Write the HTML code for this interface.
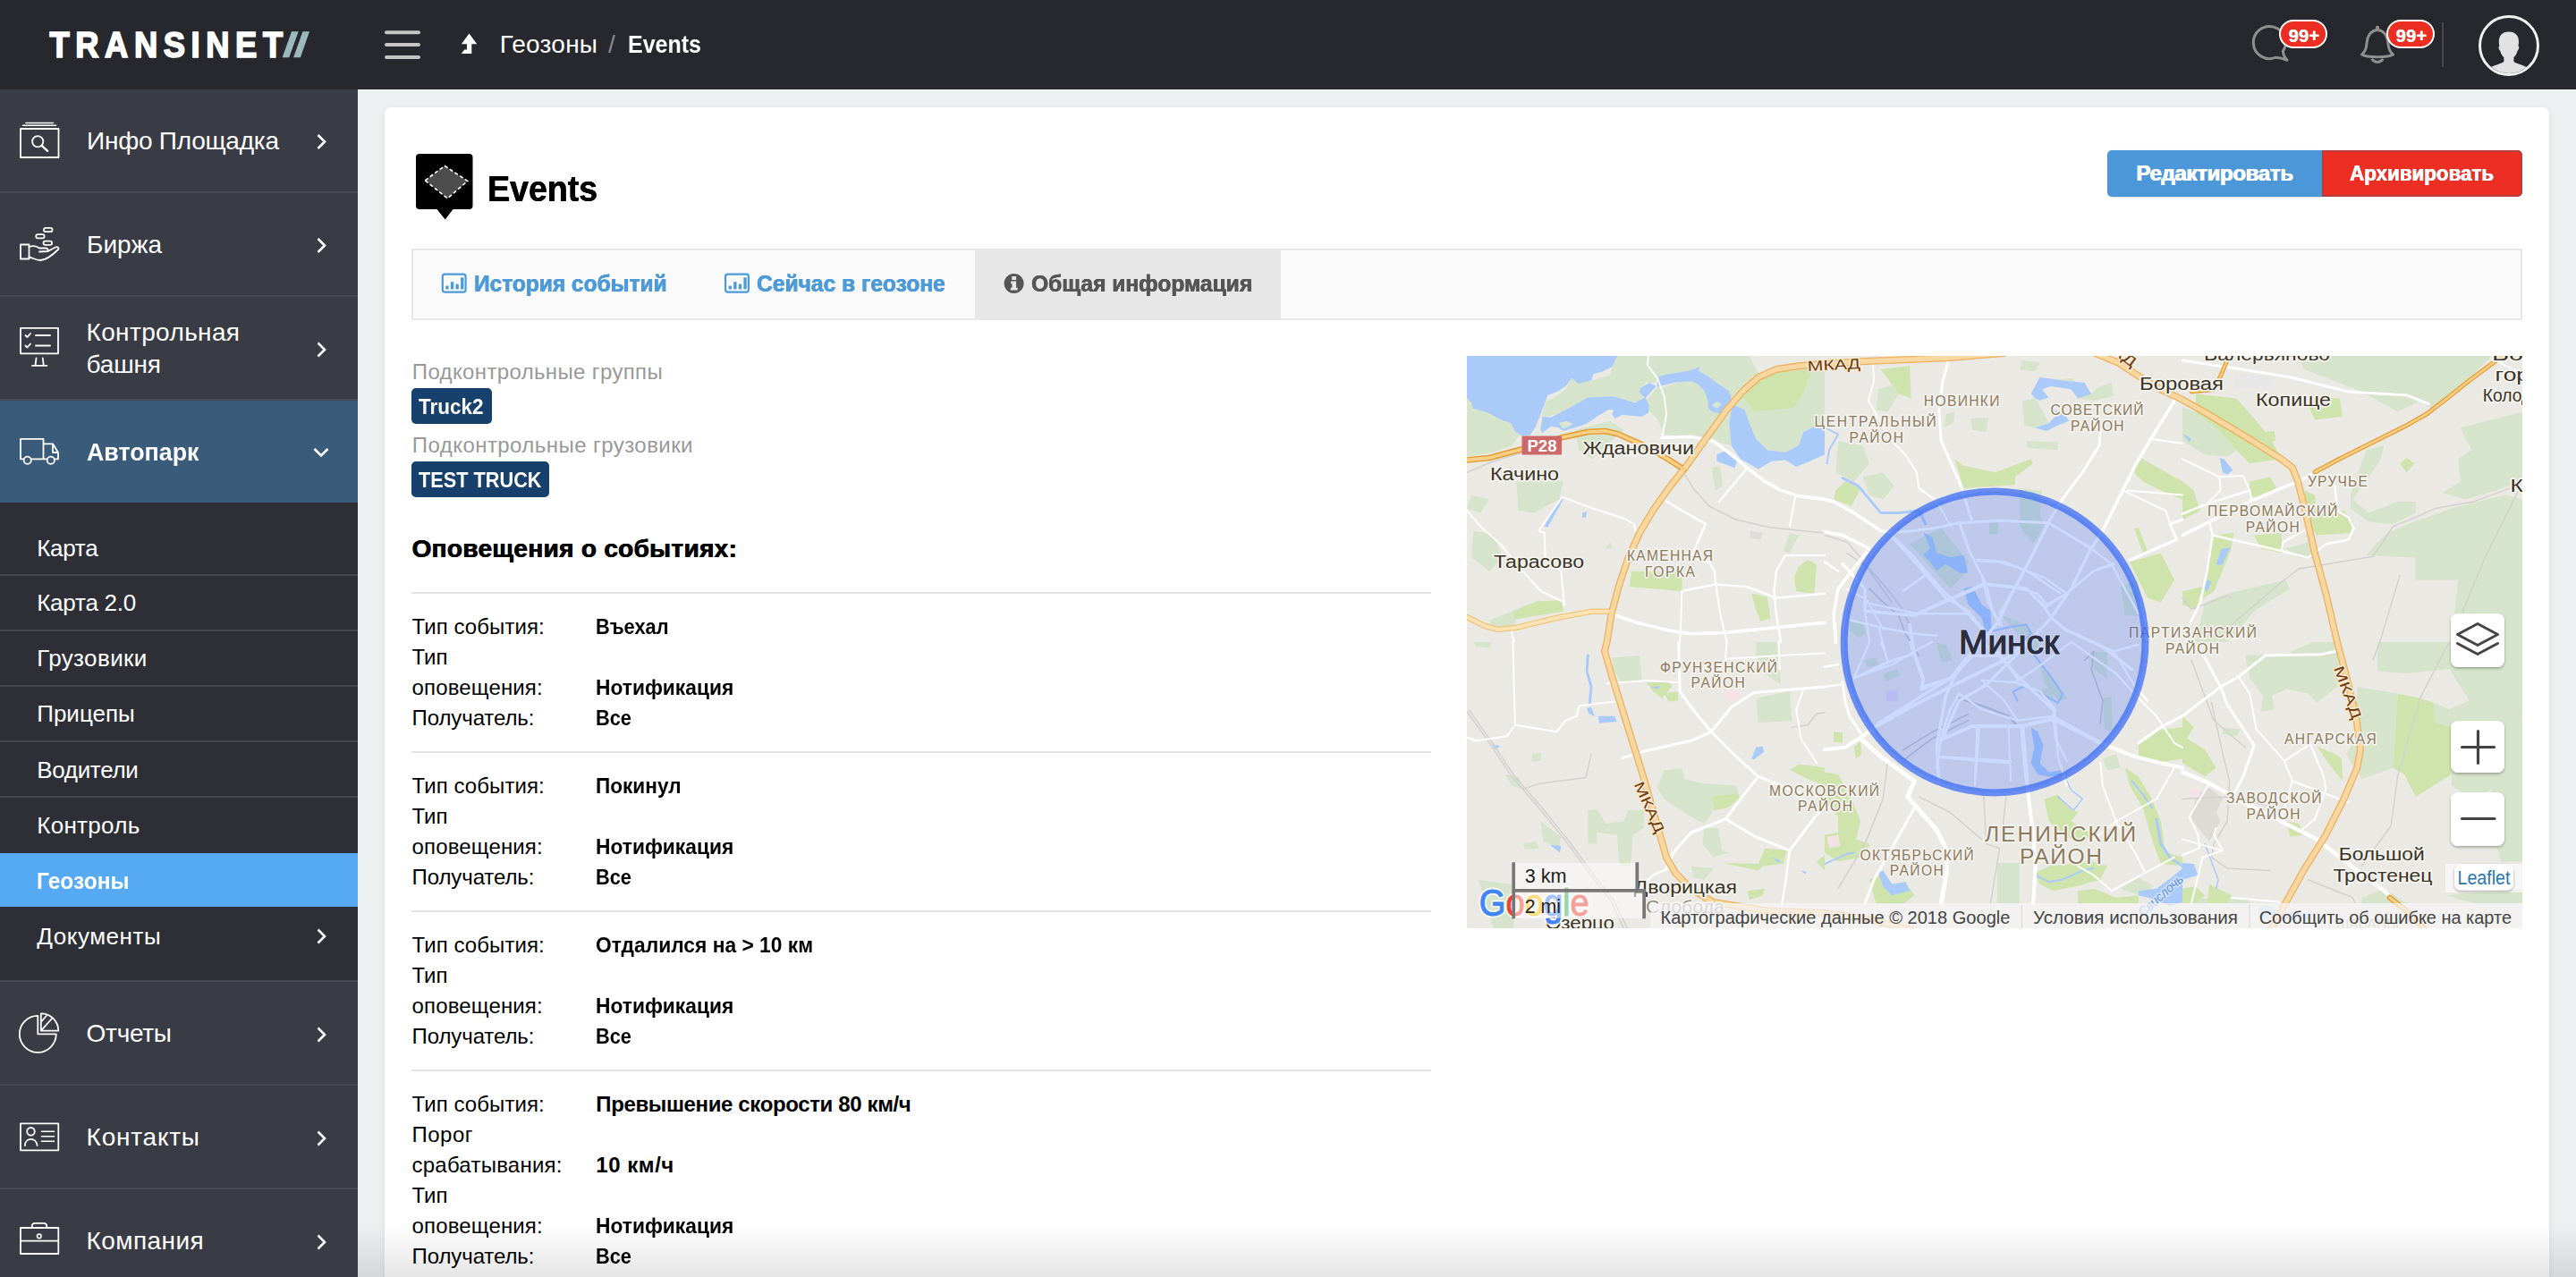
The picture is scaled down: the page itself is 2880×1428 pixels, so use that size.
<!DOCTYPE html>
<html lang="ru">
<head>
<meta charset="utf-8">
<title>Events</title>
<style>
*{box-sizing:border-box;margin:0;padding:0}
html,body{width:2880px;height:1428px;overflow:hidden;background:#ecf0f1;font-family:"Liberation Sans",sans-serif;color:#000}
body{position:relative}
.a{position:absolute}
.t{position:absolute;white-space:pre;line-height:1}
#hdr{position:absolute;left:0;top:0;width:2880px;height:100px;background:#27282e}
#side{position:absolute;left:0;top:100px;width:400px;height:1328px;background:#393b45}
.ln{position:absolute;left:0;width:400px;height:2px;background:#474953}
.sl{position:absolute;left:0;width:400px;height:2px;background:#45464e}
#card{position:absolute;left:430px;top:120px;width:2420px;height:1400px;background:#fff;border-radius:7px;box-shadow:0 3px 9px rgba(0,0,0,.075)}
.hr{position:absolute;left:460px;width:1140px;height:2px;background:#e4e4e4}
.bdg{position:absolute;background:#17406d;border-radius:5px;height:40px}
.nb{position:absolute;top:22px;width:54px;height:32px;border-radius:16px;background:#ec2d22;border:2px solid #fff}
.mbtn{position:absolute;left:1100px;width:60px;height:60px;background:#fff;border-radius:8px;box-shadow:0 2px 3px rgba(0,0,0,.3)}
svg{position:absolute;overflow:visible}
</style>
</head>
<body>
<!-- page background / card -->
<div id="card"></div>

<!-- header -->
<div id="hdr"></div>
<!-- logo -->
<svg class="a" style="left:0;top:0" width="400" height="100" viewBox="0 0 400 100">
  <text transform="translate(55.5,64.1) scale(0.9,1)" x="0" y="0" font-family="Liberation Sans, sans-serif" font-weight="700" font-size="40.4" fill="#fff" stroke="#fff" stroke-width="1.7" stroke-linejoin="miter" textLength="289.6" lengthAdjust="spacing">TRANSINET</text>
  <polygon points="315.7,64.2 323.2,64.2 333.7,35.3 326,35.3" fill="#9bb8bf"/>
  <polygon points="328.1,64.2 335.9,64.2 346,35.3 338.4,35.3" fill="#9bb8bf"/>
</svg>
<!-- hamburger + level-up arrow -->
<svg class="a" style="left:0;top:0" width="900" height="100" viewBox="0 0 900 100">
  <g stroke="#c6c6c6" stroke-width="4" stroke-linecap="round">
    <line x1="432" y1="36.3" x2="468" y2="36.3"/><line x1="432" y1="50.1" x2="468" y2="50.1"/><line x1="432" y1="63.9" x2="468" y2="63.9"/>
  </g>
  <polygon points="524.5,37.5 533.2,49.2 527.3,49.2 527.3,60 515.7,60 519.2,55.5 522,55.5 522,49.2 515.9,49.2" fill="#fff"/>
</svg>
<!-- header right icons -->
<svg class="a" style="left:2500px;top:0" width="380" height="100" viewBox="2500 0 380 100">
  <!-- chat bubble -->
  <path d="M2552.4 57.4 A18 18 0 1 0 2544.2 64.2 Q2550.5 64.4 2557 67.3 Q2552.6 62.6 2552.4 57.4Z" fill="none" stroke="#8f8f8f" stroke-width="3" stroke-linejoin="round"/>
  <!-- bell -->
  <path d="M2658 33.5 C2649 34.5 2646.5 42 2646 49 C2645.6 55 2643.5 58.5 2640.5 61 C2646 64.5 2670 64.5 2675.5 61 C2672.5 58.5 2670.4 55 2670 49 C2669.5 42 2667 34.5 2658 33.5Z" fill="none" stroke="#8f8f8f" stroke-width="3" stroke-linejoin="round"/>
  <circle cx="2658" cy="31" r="2.2" fill="#8f8f8f"/>
  <path d="M2651.5 66 Q2658 73 2664.5 66" fill="none" stroke="#8f8f8f" stroke-width="3"/>
  <!-- divider -->
  <rect x="2730" y="25" width="2" height="50" fill="#47484e"/>
  <!-- avatar -->
  <defs><clipPath id="avc"><circle cx="2805" cy="51" r="31"/></clipPath></defs>
  <circle cx="2805" cy="51" r="32.5" fill="#27282e" stroke="#f1f1f1" stroke-width="3"/>
  <g clip-path="url(#avc)" fill="#e2e2e2">
    <path d="M2805 35.5 c7 0 11 4 11 11 c0 2 -0.3 3.5 -0.6 5 c1.2 0.3 1.2 3.5 -0.8 5.2 c-0.8 3.5 -2.6 6 -4.2 7.6 l0 4.5 c2 2.5 12 4 17 8 c4 3 5 8 5 12 l-55 0 c0 -4 1 -9 5 -12 c5 -4 15 -5.5 17 -8 l0 -4.5 c-1.6 -1.6 -3.4 -4.1 -4.2 -7.6 c-2 -1.7 -2 -4.9 -0.8 -5.2 c-0.3 -1.5 -0.6 -3 -0.6 -5 c0 -7 4 -11 11 -11z"/>
  </g>
</svg>
<div class="nb" style="left:2548px"></div>
<div class="nb" style="left:2668px"></div>

<!-- sidebar -->
<div id="side">
  <div class="a" style="left:0;top:348px;width:400px;height:114px;background:#3b5b7b"></div>
  <div class="a" style="left:0;top:462px;width:400px;height:534px;background:#2e2f36"></div>
  <div class="a" style="left:0;top:854px;width:400px;height:60px;background:#55aaf3"></div>
  <div class="ln" style="top:114px"></div><div class="ln" style="top:230px"></div><div class="ln" style="top:346px"></div>
  <div class="ln" style="top:996px"></div><div class="ln" style="top:1112px"></div><div class="ln" style="top:1228px"></div>
  <div class="sl" style="top:542px"></div><div class="sl" style="top:604px"></div><div class="sl" style="top:666px"></div>
  <div class="sl" style="top:728px"></div><div class="sl" style="top:790px"></div>
</div>
<!-- sidebar icons (page coords) -->
<svg class="a" style="left:0;top:0" width="400" height="1428" viewBox="0 0 400 1428" fill="none" stroke="#fff" stroke-width="1.8" stroke-linejoin="round" stroke-linecap="round">
  <!-- chevrons -->
  <g stroke-width="2.6" stroke-linecap="butt" stroke-linejoin="miter">
    <polyline points="355.5,151 363,158.5 355.5,166"/>
    <polyline points="355.5,267 363,274.5 355.5,282"/>
    <polyline points="355.5,383.5 363,391 355.5,398.5"/>
    <polyline points="351.5,502 359,509.5 366.5,502"/>
    <polyline points="355.5,1039.5 363,1047 355.5,1054.5"/>
    <polyline points="355.5,1149.5 363,1157 355.5,1164.5"/>
    <polyline points="355.5,1265.5 363,1273 355.5,1280.5"/>
    <polyline points="355.5,1381.5 363,1389 355.5,1396.5"/>
  </g>
  <!-- 1 info board -->
  <rect x="23" y="144" width="42.5" height="32"/>
  <line x1="29" y1="137.5" x2="59.5" y2="137.5" stroke-width="1.6"/><line x1="25.5" y1="140.3" x2="62.5" y2="140.3" stroke-width="1.6"/>
  <circle cx="42.2" cy="158.2" r="6.1"/><line x1="46.8" y1="162.8" x2="53.2" y2="168.8" stroke-width="2.4"/>
  <!-- 2 hand with coins -->
  <rect x="23" y="273.5" width="9.5" height="16"/>
  <path d="M32.5 276 C37 274.5 41 275 44 277.5 L51 277.5 Q54.5 278 53.5 281 L44 281.5 M53.5 281 L62 276.5 Q65.5 275.5 65.5 278.5 C60 284 52 291 45 291 C40 291 36 288 32.5 287.5"/>
  <rect x="49" y="254.8" width="9.6" height="4.4" rx="2.2"/><rect x="40.2" y="262.2" width="9.4" height="4.2" rx="2.1"/><rect x="48.5" y="269.6" width="9.6" height="4.2" rx="2.1"/>
  <!-- 3 monitor checklist -->
  <rect x="23" y="366.8" width="42" height="28.5"/>
  <path d="M40.5 400.5 L39.5 408.8 M47.8 400.5 L48.8 408.8 M36 408.8 L52.4 408.8"/>
  <polyline points="28.5,375 30.5,377 34,373"/><polyline points="28.5,386.5 30.5,388.5 34,384.5"/>
  <line x1="40" y1="375" x2="56" y2="375"/><line x1="40" y1="386.5" x2="56" y2="386.5"/>
  <!-- 4 truck -->
  <path d="M23 513 L23 490.8 L48.5 490.8 L48.5 513 M48.5 496.3 L59 496.3 L65 506 L65 513.3 L61.3 513.3 M52.3 513.3 L35.2 513.3 M26.2 513.3 L23 513.3 M59 496.3 L59 506 L65 506"/>
  <circle cx="30.7" cy="514.8" r="4.1"/><circle cx="56.8" cy="514.8" r="4.1"/>
  <!-- 5 pie -->
  <path d="M42.3 1135.8 A20.5 20.5 0 1 0 62.8 1156.3 L42.3 1156.3 Z"/>
  <path d="M45.8 1133.3 A19.5 19.5 0 0 1 65.3 1152.6 L45.8 1152.6 Z M45.8 1152.6 L58.5 1138.5 M45.8 1143 L52.5 1135"/>
  <!-- 6 contact card -->
  <rect x="23" y="1256.3" width="42.3" height="30"/>
  <circle cx="34.5" cy="1265.3" r="4.3"/><path d="M27.8 1281 C28.5 1271.5 40.5 1271.5 41.6 1281"/>
  <g stroke-width="1.6"><line x1="46.5" y1="1265.3" x2="60.5" y2="1265.3"/><line x1="46.5" y1="1270.8" x2="60.5" y2="1270.8"/><line x1="46.5" y1="1276.2" x2="60.5" y2="1276.2"/></g>
  <!-- 7 briefcase -->
  <rect x="23" y="1373" width="42.3" height="29"/>
  <path d="M35.8 1373 L35.8 1370.5 Q36 1367.8 39 1367.8 L49 1367.8 Q52 1367.8 52.2 1370.5 L52.2 1373 M23 1387.7 L65.3 1387.7"/>
  <circle cx="43.8" cy="1382.3" r="2.3" stroke-width="1.6"/>
</svg>

<!-- Events icon -->
<svg class="a" style="left:460px;top:165px" width="80" height="90" viewBox="460 165 80 90">
  <path d="M469 172 H524.5 Q528.5 172 528.5 176 V230 Q528.5 234 524.5 234 H506.5 L497.7 245.6 L488.5 234 H469 Q465 234 465 230 V176 Q465 172 469 172Z" fill="#000"/>
  <polygon points="475.2,201.8 497.2,185.5 522.8,202.5 500.3,221.8" fill="#4d4d4d" stroke="#fff" stroke-width="1.6" stroke-dasharray="4.2 2.6"/>
</svg>

<!-- buttons -->
<div class="a" style="left:2356px;top:168px;width:240px;height:52px;background:#4c97d8;border-radius:5px 0 0 5px;box-shadow:0 1px 2px rgba(0,0,0,.15)"></div>
<div class="a" style="left:2596px;top:168px;width:224px;height:52px;background:#ec2e23;border:2px solid #b53d3b;border-radius:0 5px 5px 0"></div>

<!-- tabs -->
<div class="a" style="left:460px;top:278px;width:2360px;height:80px;background:#fafafa;border:2px solid #e7e7e7"></div>
<div class="a" style="left:1090px;top:278px;width:342px;height:80px;background:#e7e7e7"></div>
<svg class="a" style="left:480px;top:295px" width="700" height="50" viewBox="480 295 700 50">
  <g fill="none" stroke="#4c9ad9" stroke-width="2.2">
    <rect x="494.8" y="306.6" width="25.8" height="20" rx="2.6"/>
    <g fill="#4c9ad9" stroke="none"><rect x="498.3" y="319.6" width="3.3" height="3.8"/><rect x="503.9" y="315.2" width="3.3" height="8.2"/><rect x="509.5" y="317.6" width="3.3" height="5.8"/><rect x="515.1" y="310.3" width="3.3" height="13.1"/></g>
  </g>
  <g transform="translate(316.3,0)" fill="none" stroke="#4c9ad9" stroke-width="2.2">
    <rect x="494.8" y="306.6" width="25.8" height="20" rx="2.6"/>
    <g fill="#4c9ad9" stroke="none"><rect x="498.3" y="319.6" width="3.3" height="3.8"/><rect x="503.9" y="315.2" width="3.3" height="8.2"/><rect x="509.5" y="317.6" width="3.3" height="5.8"/><rect x="515.1" y="310.3" width="3.3" height="13.1"/></g>
  </g>
  <circle cx="1133.6" cy="317" r="11" fill="#555"/>
  <path d="M1131.3 309 h4.8 v4 h-4.8z M1130.2 314.6 h5.9 v7.2 h1.6 v2.7 h-7.9 v-2.7 h1.7 v-4.5 h-1.3z" fill="#e7e7e7"/>
</svg>

<!-- badges -->
<div class="bdg" style="left:460px;top:433.5px;width:89.5px"></div>
<div class="bdg" style="left:460px;top:515.5px;width:153.5px"></div>

<!-- hrs -->
<div class="hr" style="top:662px"></div><div class="hr" style="top:840px"></div><div class="hr" style="top:1018px"></div><div class="hr" style="top:1196px"></div>

<!-- map -->
<div class="a" id="map" style="left:1640px;top:398px;width:1180px;height:640px;overflow:hidden;background:#ebe9e4">
<svg width="1180" height="640" viewBox="0 0 1180 640" style="left:0;top:0" font-family="Liberation Sans, sans-serif">
<rect width="1180" height="640" fill="#ebe9e4"/>
<polygon points="0.0,46.4 5.0,46.4 20.1,55.1 55.1,72.7 60.2,86.5 50.1,100.3 30.1,107.8 0.0,112.8" fill="#d6e4cb"/>
<polygon points="110.3,37.6 117.8,23.8 140.4,27.6 160.4,21.3 162.9,10.0 167.4,0.0 205.5,0.0 200.5,30.1 193.0,37.6 198.0,50.1 185.5,51.4 165.4,45.1 140.4,46.4 117.8,56.4 100.3,65.2 84.0,68.9 82.7,70.2 87.7,51.4 100.3,45.1" fill="#d6e4cb"/>
<polygon points="205.5,0.0 315.8,0.0 325.8,20.1 295.7,53.9 283.2,41.4 270.7,30.1 258.1,20.1 260.7,12.5 250.6,16.3 230.6,20.1 213.0,25.1 210.5,30.1 200.5,30.1" fill="#d6e4cb"/>
<polygon points="220.6,35.1 250.6,25.1 268.2,35.1 275.7,50.1 295.7,60.2 293.2,75.2 295.7,100.3 275.7,95.2 240.6,90.2 220.6,87.7 213.0,70.2 203.0,61.4 200.5,50.1 213.0,35.1" fill="#d6e4cb"/>
<polygon points="325.8,20.1 400.0,7.5 400.0,72.7 391.0,77.7 375.9,85.2 370.9,100.3 355.9,107.8 335.8,105.3 323.3,92.7 315.8,75.2 310.8,60.2 295.7,53.9" fill="#d6e4cb"/>
<polygon points="55.1,140.4 82.7,135.3 107.8,140.4 102.8,160.4 75.2,175.4 57.6,172.9" fill="#d6e4cb"/>
<polygon points="7.5,195.5 30.1,200.5 40.1,225.6 25.1,240.6 5.0,225.6" fill="#d6e4cb"/>
<polygon points="5.0,155.4 25.1,160.4 15.0,175.4 0.0,170.4" fill="#d6e4cb"/>
<polygon points="160.4,208.0 162.9,215.5 154.1,215.5" fill="#d6e4cb"/>
<polygon points="120.3,82.7 160.4,72.7 175.4,82.7 155.4,100.3 140.4,115.3 125.3,105.3" fill="#d6e4cb"/>
<polygon points="25.1,295.7 55.1,283.2 77.7,274.4 105.3,273.2 107.8,285.7 55.1,293.2 50.1,308.3 27.6,303.3" fill="#d6e4cb"/>
<polygon points="273.2,125.3 283.2,122.8 285.7,145.4 278.2,150.4" fill="#d6e4cb"/>
<polygon points="360.9,198.0 370.9,200.5 360.9,220.6 353.4,218.0" fill="#d6e4cb"/>
<polygon points="415.0,95.2 442.6,100.3 450.1,120.3 432.6,140.4 412.5,130.3" fill="#d6e4cb"/>
<polygon points="442.6,135.3 465.2,130.3 477.7,145.4 465.2,160.4 450.1,155.4" fill="#d6e4cb"/>
<polygon points="535.3,65.2 545.4,62.7 544.1,75.2 532.8,80.2" fill="#d6e4cb"/>
<polygon points="562.9,70.2 583.0,68.9 580.5,85.2 565.4,82.7" fill="#d6e4cb"/>
<polygon points="620.6,50.1 635.6,47.6 650.6,75.2 635.6,80.2 623.1,77.7" fill="#d6e4cb"/>
<polygon points="625.6,95.2 660.7,96.5 660.7,105.3 625.6,102.8" fill="#d6e4cb"/>
<polygon points="640.6,27.6 675.7,25.1 698.2,42.6 705.8,35.1 720.8,30.1 723.3,45.1 700.8,50.1 683.2,47.6 675.7,37.6 653.1,33.8" fill="#d6e4cb"/>
<polygon points="618.0,147.9 643.1,150.4 640.6,175.4 644.4,190.5 633.1,210.5 618.0,190.5" fill="#d6e4cb"/>
<polygon points="584.2,186.7 594.2,186.7 594.2,199.2 584.2,199.2" fill="#d6e4cb"/>
<polygon points="730.8,260.7 748.4,255.6 750.9,275.7 735.8,278.2" fill="#d6e4cb"/>
<polygon points="460.2,37.6 475.2,32.6 482.7,42.6 470.2,62.7 457.6,60.2" fill="#d6e4cb"/>
<polygon points="620.6,5.0 640.6,7.5 635.6,17.5 618.0,15.0" fill="#d6e4cb"/>
<polygon points="930.3,0.0 1075.7,0.0 1083.2,30.1 1065.7,50.1 1040.6,62.7 1000.5,40.1 975.4,30.1 935.3,15.0" fill="#d6e4cb"/>
<polygon points="1075.7,0.0 1145.9,0.0 1125.8,20.1 1100.8,42.6 1080.7,60.2 1065.7,50.1 1083.2,30.1" fill="#d6e4cb"/>
<polygon points="1110.8,80.2 1179.9,62.7 1179.9,140.4 1150.9,150.4 1115.8,160.4 1090.7,152.9 1110.8,140.4 1108.3,115.3 1123.3,105.3" fill="#d6e4cb"/>
<polygon points="1005.5,105.3 1025.6,100.3 1020.6,117.8 990.5,160.4 1008.0,175.4 1040.6,162.9 1060.7,162.9 1060.7,175.4 1035.6,188.0 1008.0,185.5 988.0,170.4 988.0,155.4" fill="#d6e4cb"/>
<polygon points="1045.6,190.5 1100.8,170.4 1160.9,155.4 1179.9,160.4 1179.9,320.1 1100.8,320.1 1108.3,250.6 1060.7,250.6 1060.7,225.6 1005.5,223.1 1025.6,200.5" fill="#d6e4cb"/>
<polygon points="825.1,275.7 850.1,265.7 915.3,250.6 920.3,260.7 882.7,283.2 850.1,320.1 815.0,320.1" fill="#d6e4cb"/>
<polygon points="915.3,215.5 940.4,208.0 947.9,225.6 930.3,225.6" fill="#d6e4cb"/>
<polygon points="800.0,57.6 815.0,62.7 840.1,82.7 860.2,105.3 850.1,112.8 825.1,110.3 800.0,95.2" fill="#d6e4cb"/>
<polygon points="162.9,337.5 193.0,335.0 195.5,362.6 172.9,365.1 162.9,350.1" fill="#d6e4cb"/>
<polygon points="220.6,462.9 240.6,461.6 243.1,472.9 263.2,477.9 300.8,480.4 305.8,495.4 275.7,508.0 265.7,523.0 250.6,515.5 220.6,495.4 213.0,482.9" fill="#d6e4cb"/>
<polygon points="135.3,508.0 145.4,506.7 155.4,523.0 175.4,520.5 180.5,508.0 198.0,508.0 198.0,528.0 185.5,535.5 183.0,570.6 170.4,570.6 167.9,535.5 145.4,533.0 145.4,545.6 135.3,545.6" fill="#d6e4cb"/>
<polygon points="82.7,520.5 105.3,538.0 102.8,550.6 85.2,543.1" fill="#d6e4cb"/>
<polygon points="72.7,445.3 82.7,444.1 82.7,452.8 72.7,454.1" fill="#d6e4cb"/>
<polygon points="62.7,545.6 77.7,543.1 80.2,550.6 65.2,551.8" fill="#d6e4cb"/>
<polygon points="265.7,528.0 280.7,528.0 285.7,553.1 293.2,555.6 275.7,560.6 263.2,545.6" fill="#d6e4cb"/>
<polygon points="323.3,382.7 360.9,375.1 363.4,407.7 325.8,410.2" fill="#d6e4cb"/>
<polygon points="323.3,320.0 348.4,320.0 350.9,367.6 335.8,357.6 323.3,335.0" fill="#d6e4cb"/>
<polygon points="12.5,585.7 50.1,590.7 52.6,640.1 30.1,640.1" fill="#d6e4cb"/>
<polygon points="250.6,570.6 275.7,573.1 265.7,585.7 253.1,583.2" fill="#d6e4cb"/>
<polygon points="7.5,320.0 27.6,320.0 25.1,326.3 10.0,325.0" fill="#d6e4cb"/>
<polygon points="42.6,467.9 57.6,470.4 65.2,485.4 50.1,480.4" fill="#d6e4cb"/>
<polygon points="593.0,566.9 618.0,566.9 618.0,612.0 593.0,612.0" fill="#d6e4cb"/>
<polygon points="710.8,450.3 725.8,445.3 730.8,460.4 715.8,462.9" fill="#d6e4cb"/>
<polygon points="730.8,595.7 750.9,583.2 768.4,593.2 750.9,603.2" fill="#d6e4cb"/>
<polygon points="710.8,382.7 720.8,381.4 722.1,420.3 713.3,417.7" fill="#d6e4cb"/>
<polygon points="445.1,340.1 457.6,337.5 460.2,345.1 447.6,348.8" fill="#d6e4cb"/>
<polygon points="465.2,355.1 480.2,350.1 484.0,357.6 468.9,363.9" fill="#d6e4cb"/>
<polygon points="525.3,325.0 535.3,322.5 542.9,337.5 530.3,335.0" fill="#d6e4cb"/>
<polygon points="643.1,372.6 653.1,371.4 655.6,382.7 646.9,385.2" fill="#d6e4cb"/>
<polygon points="698.2,332.5 710.8,330.0 713.3,347.6 700.8,345.1" fill="#d6e4cb"/>
<polygon points="870.2,335.0 917.8,332.5 945.4,320.0 970.4,320.0 975.4,340.1 972.9,370.1 950.4,387.7 940.4,377.6 915.3,372.6 900.3,380.2 902.8,395.2 887.7,397.7 890.2,380.2 875.2,360.1" fill="#d6e4cb"/>
<polygon points="995.5,370.1 1040.6,377.6 1035.6,460.4 1000.5,472.9 983.0,445.3 998.0,420.3 993.0,402.7" fill="#d6e4cb"/>
<polygon points="1018.0,320.0 1098.2,320.0 1098.2,350.1 1050.6,355.1 1018.0,352.6" fill="#d6e4cb"/>
<polygon points="1098.2,395.2 1120.8,385.2 1179.9,402.7 1179.9,460.4 1160.9,475.4 1125.8,495.4 1100.8,480.4 1100.8,467.9 1103.3,415.2" fill="#d6e4cb"/>
<polygon points="1083.2,410.2 1103.3,415.2 1098.2,395.2 1080.7,387.7" fill="#d6e4cb"/>
<polygon points="1138.3,470.4 1179.9,460.4 1179.9,565.6 1155.9,565.6 1148.4,535.5 1133.3,520.5 1150.9,495.4" fill="#d6e4cb"/>
<polygon points="845.1,415.2 865.2,417.7 860.2,425.3 845.1,422.8" fill="#d6e4cb"/>
<polygon points="1095.7,603.2 1179.9,595.7 1179.9,612.0 1125.8,612.0" fill="#d6e4cb"/>
<polygon points="1000.5,605.7 1025.6,595.7 1050.6,612.0 1000.5,612.0" fill="#d6e4cb"/>
<polygon points="800.0,605.7 875.2,608.2 875.2,612.0 800.0,612.0" fill="#d6e4cb"/>
<polygon points="1098.2,320.0 1179.9,320.0 1179.9,402.7 1120.8,385.2 1098.2,350.1" fill="#d6e4cb"/>
<polygon points="495.2,210.1 530.3,192.6 560.4,230.2 555.4,245.2 540.4,260.3 517.8,235.2" fill="#d6e4cb"/>
<polygon points="598.0,290.3 625.6,300.4 640.6,320.4 635.6,330.4 615.5,310.4" fill="#d6e4cb"/>
<polygon points="525.3,320.4 535.3,322.9 542.9,340.5 530.3,343.0" fill="#d6e4cb"/>
<polygon points="730.8,257.7 750.9,250.2 750.9,290.3 735.8,290.3" fill="#d6e4cb"/>
<polygon points="695.7,335.4 715.8,330.4 715.8,360.5 700.8,350.5" fill="#d6e4cb"/>
<polygon points="640.6,345.5 660.7,365.5 670.7,383.1 660.7,385.6 645.6,365.5" fill="#d6e4cb"/>
<polygon points="427.6,296.6 442.6,296.6 445.1,310.4 437.6,315.4 428.8,307.9" fill="#d6e4cb"/>
<polygon points="308.3,45.1 323.3,27.6 350.9,17.5 386.0,15.0 375.9,42.6 365.9,57.6 320.8,62.7" fill="#cfe4ad"/>
<polygon points="52.6,285.7 77.7,274.4 105.3,273.2 107.8,285.7 53.9,294.5" fill="#cfe4ad"/>
<polygon points="184.2,240.6 240.6,241.9 240.6,263.2 181.7,258.1" fill="#cfe4ad"/>
<polygon points="370.9,235.6 381.0,228.1 391.0,233.1 388.5,265.7 368.4,263.2 365.9,248.1" fill="#cfe4ad"/>
<polygon points="318.3,265.7 335.8,269.4 339.6,293.2 328.3,297.0 322.1,280.7" fill="#cfe4ad"/>
<polygon points="462.7,15.0 495.2,11.3 496.5,47.6 482.7,42.6 470.2,25.1" fill="#cfe4ad"/>
<polygon points="545.4,115.3 555.4,122.8 590.5,130.3 630.6,115.3 633.1,120.3 613.0,135.3 613.0,144.1 555.4,147.9 550.4,130.3" fill="#cfe4ad"/>
<polygon points="412.5,150.4 422.6,140.4 440.1,147.9 430.1,167.9 410.0,160.4" fill="#cfe4ad"/>
<polygon points="745.9,130.3 750.9,112.8 791.0,135.3 800.0,140.4 800.0,160.4 775.9,150.4 755.9,140.4" fill="#cfe4ad"/>
<polygon points="740.9,230.6 775.9,220.6 791.0,250.6 775.9,275.7 760.9,270.7 750.9,250.6" fill="#cfe4ad"/>
<polygon points="745.9,193.0 750.9,191.7 760.9,218.0 755.9,220.6" fill="#cfe4ad"/>
<polygon points="815.0,42.6 860.2,47.6 882.7,72.7 900.3,95.2 910.3,115.3 875.2,120.3 860.2,105.3 840.1,82.7 815.0,62.7" fill="#cfe4ad"/>
<polygon points="940.4,45.1 975.4,47.6 979.2,67.7 947.9,71.4 941.6,57.6" fill="#cfe4ad"/>
<polygon points="890.2,85.2 902.8,84.0 904.0,95.2 891.5,96.5" fill="#cfe4ad"/>
<polygon points="800.0,140.4 812.5,150.4 820.1,172.9 800.0,183.0" fill="#cfe4ad"/>
<polygon points="875.2,140.4 897.7,135.3 905.3,147.9 887.7,160.4 875.2,155.4" fill="#cfe4ad"/>
<polygon points="936.6,150.4 947.9,155.4 950.4,175.4 980.5,172.9 990.5,185.5 988.0,198.0 950.4,200.5 940.4,185.5" fill="#cfe4ad"/>
<polygon points="832.6,200.5 857.6,198.0 853.9,218.0 835.1,263.2 820.1,273.2 827.6,240.6" fill="#cfe4ad"/>
<polygon points="880.2,200.5 910.3,198.0 911.5,220.6 887.7,215.5" fill="#cfe4ad"/>
<polygon points="1043.1,120.3 1050.6,114.0 1059.4,120.3 1050.6,130.3" fill="#cfe4ad"/>
<polygon points="800.0,263.2 822.6,258.1 815.0,283.2 800.0,278.2" fill="#cfe4ad"/>
<polygon points="200.5,365.1 225.6,363.9 229.3,370.1 218.0,382.7 208.0,375.1" fill="#cfe4ad"/>
<polygon points="274.4,492.9 303.3,489.2 304.5,495.4 290.7,505.5 276.9,508.0" fill="#cfe4ad"/>
<polygon points="360.9,462.9 370.9,456.6 400.0,460.4 400.0,480.4 381.0,472.9" fill="#cfe4ad"/>
<polygon points="285.7,566.9 325.8,568.1 333.3,550.6 358.4,553.1 353.4,568.1 330.8,570.6 325.8,575.6" fill="#cfe4ad"/>
<polygon points="313.3,598.2 333.3,595.7 330.8,603.2 315.8,608.2" fill="#cfe4ad"/>
<polygon points="391.0,565.6 400.0,558.1 400.0,575.6" fill="#cfe4ad"/>
<polygon points="220.6,377.6 235.6,375.1 236.8,385.2 225.6,386.4" fill="#cfe4ad"/>
<polygon points="645.6,495.4 660.7,490.4 670.7,503.0 683.2,510.5 675.7,520.5 700.8,535.5 685.7,545.6 665.7,535.5 650.6,520.5" fill="#cfe4ad"/>
<polygon points="750.9,435.3 775.9,417.7 800.0,415.2 800.0,450.3 770.9,455.3 750.9,450.3" fill="#cfe4ad"/>
<polygon points="400.0,465.4 415.0,467.9 430.1,495.4 440.1,520.5 435.1,540.6 450.1,545.6 442.6,560.6 415.0,565.6 400.0,555.6 400.0,535.5 415.0,533.0 415.0,515.5 400.0,495.4" fill="#cfe4ad"/>
<polygon points="450.1,585.7 465.2,575.6 475.2,590.7 490.2,588.2 500.3,603.2 487.7,613.2 457.6,613.2" fill="#cfe4ad"/>
<polygon points="410.0,420.3 420.1,421.5 420.1,432.8 410.0,431.5" fill="#cfe4ad"/>
<polygon points="432.6,437.8 440.1,430.3 441.4,445.3 435.1,450.3" fill="#cfe4ad"/>
<polygon points="635.6,578.1 650.6,570.6 700.8,565.6 715.8,570.6 708.3,585.7 680.7,593.2 655.6,598.2 640.6,590.7" fill="#cfe4ad"/>
<polygon points="683.2,598.2 700.8,595.7 725.8,605.7 750.9,603.2 750.9,612.0 683.2,612.0" fill="#cfe4ad"/>
<polygon points="735.8,460.4 750.9,470.4 765.9,495.4 775.9,520.5 781.0,555.6 800.0,560.6 800.0,570.6 775.9,568.1 765.9,540.6 755.9,505.5 740.9,480.4" fill="#cfe4ad"/>
<polygon points="1040.6,377.6 1065.7,382.7 1080.7,387.7 1083.2,410.2 1103.3,415.2 1100.8,467.9 1060.7,492.9 1048.1,467.9 1035.6,460.4" fill="#cfe4ad"/>
<polygon points="800.0,402.7 812.5,415.2 805.0,427.8 825.1,440.3 837.6,460.4 825.1,470.4 800.0,455.3" fill="#cfe4ad"/>
<polygon points="950.4,436.5 970.4,445.3 977.9,450.3 979.2,475.4 962.9,455.3" fill="#cfe4ad"/>
<polygon points="916.5,520.5 930.3,523.0 935.3,535.5 920.3,538.0" fill="#cfe4ad"/>
<polygon points="800.0,595.7 815.0,593.2 825.1,603.2 815.0,612.0 800.0,612.0" fill="#cfe4ad"/>
<polygon points="830.1,590.7 855.1,603.2 850.1,612.0 827.6,612.0" fill="#cfe4ad"/>
<polygon points="317.0,195.5 330.8,198.0 328.3,205.5 315.8,203.0" fill="#dddcd8"/>
<polygon points="857.6,20.1 900.3,22.6 900.3,37.6 857.6,35.1" fill="#e7e7e7"/>
<polygon points="288.2,373.9 303.3,373.9 304.5,382.7 295.7,387.7 288.2,381.4" fill="#f6e3e6"/>
<polygon points="468.9,373.9 481.5,373.9 481.5,386.4 468.9,386.4" fill="#e3d9ee"/>
<polygon points="402.5,538.0 415.0,535.5 417.5,548.1 405.0,550.6" fill="#f3e2e4"/>
<polygon points="885.2,615.7 900.3,614.5 905.3,620.8 950.4,623.3 940.4,630.8 885.2,628.3" fill="#c4dcfa"/>
<polygon points="815.0,490.4 830.1,482.9 845.1,495.4 837.6,510.5 842.6,520.5 830.1,543.1 810.0,518.0" fill="#dedbd5"/>
<polygon points="807.5,485.4 817.5,482.9 820.1,492.9 810.0,495.4" fill="#f3e2e6"/>
<polygon points="213.0,25.1 230.6,20.1 250.6,16.3 260.7,12.5 258.1,20.1 270.7,30.1 283.2,41.4 295.7,53.9 310.8,60.2 315.8,75.2 323.3,92.7 335.8,105.3 355.9,107.8 370.9,100.3 375.9,85.2 391.0,77.7 400.0,72.7 400.0,110.3 383.5,117.8 368.4,124.1 355.9,116.5 340.9,117.8 325.8,126.6 305.8,115.3 295.7,100.3 293.2,75.2 295.7,60.2 275.7,50.1 268.2,35.1 250.6,25.1 225.6,30.1 213.0,35.1" fill="#aacbf9"/>
<polygon points="279.4,110.3 288.2,106.5 302.0,117.8 299.5,125.3 279.4,117.8" fill="#aacbf9"/>
<polygon points="104.0,159.1 107.8,160.4 90.2,191.7 86.5,190.5" fill="#aacbf9"/>
<polygon points="129.1,175.4 134.1,174.2 132.8,180.5 129.1,181.0" fill="#aacbf9"/>
<polygon points="630.6,42.6 640.6,23.8 665.7,27.6 690.7,30.1 698.2,42.6 683.2,47.6 675.7,37.6 653.1,33.8 643.1,37.6 650.6,46.4 640.6,50.1 635.6,47.6" fill="#aacbf9"/>
<polygon points="653.1,58.9 668.2,65.2 673.2,72.7 660.7,77.7 648.1,84.0 635.6,80.2 650.6,75.2 658.1,67.7" fill="#aacbf9"/>
<polygon points="841.4,114.0 846.4,115.3 856.4,127.8 850.1,132.8 845.1,130.3" fill="#aacbf9"/>
<polygon points="843.9,215.5 853.9,214.3 843.9,234.3 837.6,233.1" fill="#aacbf9"/>
<polygon points="827.6,250.6 832.6,251.9 827.6,263.2 823.8,260.7" fill="#aacbf9"/>
<polygon points="800.0,86.5 810.0,92.7 807.5,96.5" fill="#aacbf9"/>
<polygon points="146.6,402.7 165.4,402.7 167.4,409.0 147.9,410.7" fill="#aacbf9"/>
<polygon points="134.1,393.9 139.1,392.7 142.9,402.7 136.6,400.2" fill="#aacbf9"/>
<polygon points="323.3,437.8 330.8,436.5 332.1,442.8 320.8,451.6 318.3,450.3" fill="#aacbf9"/>
<polygon points="28.1,434.0 37.6,436.5 31.3,439.8" fill="#aacbf9"/>
<polygon points="92.7,546.8 105.3,548.1 104.0,555.6" fill="#aacbf9"/>
<polygon points="340.9,560.6 350.9,564.4 348.4,566.9" fill="#aacbf9"/>
<polygon points="373.4,575.6 379.7,576.9 378.4,579.4" fill="#aacbf9"/>
<polygon points="205.5,370.1 215.5,369.6 213.0,373.1" fill="#aacbf9"/>
<polygon points="630.6,415.2 638.1,420.3 644.4,435.3 640.6,455.3 650.6,465.4 665.7,462.9 668.2,467.9 650.6,470.4 638.1,467.9 630.6,455.3 634.3,437.8" fill="#aacbf9"/>
<polygon points="791.0,580.7 800.0,573.1 800.0,610.7 786.0,615.7 770.9,608.2 750.9,603.2 750.9,598.2 770.9,595.7" fill="#aacbf9"/>
<polygon points="460.2,578.1 465.2,575.6 475.2,590.7 490.2,588.2 495.2,598.2 475.2,603.2 465.2,593.2" fill="#aacbf9"/>
<polygon points="800.0,566.9 812.5,568.1 817.5,580.7 800.0,585.7" fill="#aacbf9"/>
<polygon points="0.0,0.0 168.0,0.0 162.7,11.7 151.5,17.6 141.0,20.6 139.8,27.0 124.5,31.1 117.5,24.7 110.4,34.1 101.0,39.9 90.4,44.1 87.5,51.7 82.2,65.8 76.4,79.9 70.5,88.7 61.1,89.3 54.0,84.6 49.3,75.2 38.8,71.7 23.5,63.4 7.0,58.7 4.7,51.7 0.0,47.0" fill="#aacbf9"/>
<polygon points="82.2,82.2 84.6,68.1 94.0,68.7 117.5,56.4 135.1,46.4 164.5,45.2 187.9,52.3 198.5,47.0 192.6,39.9 195.0,35.2 204.4,30.0 211.4,34.1 199.7,47.0 203.8,55.2 203.2,63.4 195.0,68.1 173.9,65.8 165.6,69.9 162.1,65.2 164.5,60.5 158.6,59.9 146.8,67.0 132.7,76.4 108.1,84.0 102.2,79.9 94.0,78.7 84.0,86.3" fill="#aacbf9"/>
<polygon points="212.6,34.1 213.2,23.5 223.2,20.6 244.3,17.6 252.6,15.3 260.2,12.3 258.4,16.4 269.0,22.3 279.6,30.5 292.5,38.8 295.4,45.8 293.7,56.4 283.1,64.6 273.7,62.3 270.2,58.7 269.0,49.3 265.5,38.8 258.4,31.7 251.4,28.2 234.9,29.4 213.8,34.1" fill="#aacbf9"/>
<polygon points="510.3,197.6 520.3,202.6 525.3,220.2 540.4,225.2 555.4,222.7 560.4,242.7 550.4,242.7 535.3,232.7 525.3,240.2 517.8,230.2 510.3,222.7 517.8,215.1 512.8,202.6" fill="#aacbf9"/>
<polygon points="555.4,260.3 565.4,257.7 575.4,277.8 585.5,285.3 586.7,305.4 580.5,310.4 575.4,292.8 560.4,277.8" fill="#aacbf9"/>
<polygon points="102.2,75.2 111.6,72.8 118.6,76.4 108.1,81.6" fill="#d9e6cf"/>
<polygon points="273.7,55.2 279.6,51.1 284.9,54.0 279.6,58.7" fill="#d9e6cf"/>
<polyline points="240.6,127.8 253.1,147.9 270.7,167.9 300.8,183.0 338.3,191.7 400.0,198.0" fill="none" stroke="#d2d1cf" stroke-width="1.5" stroke-linejoin="round" stroke-linecap="round"/>
<polyline points="0.0,130.3 30.1,117.8 62.7,107.8" fill="none" stroke="#d2d1cf" stroke-width="1.5" stroke-linejoin="round" stroke-linecap="round"/>
<polyline points="425.1,220.6 450.1,238.1 470.2,260.7 485.2,280.7 495.2,300.8" fill="none" stroke="#d2d1cf" stroke-width="1.5" stroke-linejoin="round" stroke-linecap="round"/>
<polyline points="400.0,200.5 425.1,208.0 440.1,225.6 457.6,250.6 475.2,275.7" fill="none" stroke="#d2d1cf" stroke-width="1.5" stroke-linejoin="round" stroke-linecap="round"/>
<polyline points="1179.9,142.9 1125.8,162.9 1083.2,170.4 1060.7,180.5 1035.6,190.5 1020.6,213.0 1013.0,224.3 975.4,230.6 930.3,238.1 910.3,253.1 875.2,283.2 855.1,300.8" fill="none" stroke="#d2d1cf" stroke-width="1.5" stroke-linejoin="round" stroke-linecap="round"/>
<polyline points="1175.9,150.4 1138.3,225.6 1113.3,285.7" fill="none" stroke="#d2d1cf" stroke-width="1.5" stroke-linejoin="round" stroke-linecap="round"/>
<polyline points="1043.1,245.6 1020.6,320.1" fill="none" stroke="#d2d1cf" stroke-width="1.5" stroke-linejoin="round" stroke-linecap="round"/>
<polyline points="800.0,270.7 810.0,283.2 850.1,268.2 853.9,270.7" fill="none" stroke="#d2d1cf" stroke-width="1.5" stroke-linejoin="round" stroke-linecap="round"/>
<polyline points="0.0,397.7 25.1,432.8 50.1,470.4 82.7,508.0 112.8,545.6 140.4,583.2 160.4,608.2 175.4,640.1" fill="none" stroke="#d2d1cf" stroke-width="1.5" stroke-linejoin="round" stroke-linecap="round"/>
<polyline points="2.5,396.4 27.6,431.5 52.6,469.1 85.2,506.7 115.3,544.3 142.9,581.9 164.2,608.2 179.2,640.1" fill="none" stroke="#d2d1cf" stroke-width="1.5" stroke-linejoin="round" stroke-linecap="round"/>
<polyline points="62.7,484.2 82.7,477.9 132.8,471.6 139.1,445.3" fill="none" stroke="#d2d1cf" stroke-width="1.5" stroke-linejoin="round" stroke-linecap="round"/>
<polyline points="363.4,415.2 381.0,412.7 391.0,400.2 400.0,398.9" fill="none" stroke="#d2d1cf" stroke-width="1.5" stroke-linejoin="round" stroke-linecap="round"/>
<polyline points="550.4,382.7 580.5,392.7 605.5,402.7 615.5,415.2" fill="none" stroke="#c5c4c8" stroke-width="2" stroke-linejoin="round" stroke-linecap="round"/>
<polyline points="490.2,450.3 520.3,427.8 560.4,407.7" fill="none" stroke="#c5c4c8" stroke-width="1.5" stroke-linejoin="round" stroke-linecap="round"/>
<polyline points="470.2,455.3 465.2,495.4 445.1,545.6 415.0,595.7" fill="none" stroke="#d2d1cf" stroke-width="1.5" stroke-linejoin="round" stroke-linecap="round"/>
<polyline points="505.3,492.9 540.4,510.5 575.4,540.6" fill="none" stroke="#d2d1cf" stroke-width="1.5" stroke-linejoin="round" stroke-linecap="round"/>
<polyline points="577.9,492.9 580.5,545.6 595.5,550.6 585.5,612.0" fill="none" stroke="#d2d1cf" stroke-width="1.5" stroke-linejoin="round" stroke-linecap="round"/>
<polyline points="603.0,492.9 598.0,535.5" fill="none" stroke="#d2d1cf" stroke-width="1.5" stroke-linejoin="round" stroke-linecap="round"/>
<polyline points="1098.2,320.0 1065.7,382.7 1040.6,470.4 1033.1,525.5 1000.5,570.6" fill="none" stroke="#d2d1cf" stroke-width="1.5" stroke-linejoin="round" stroke-linecap="round"/>
<polyline points="1020.6,320.0 1013.0,340.1" fill="none" stroke="#d2d1cf" stroke-width="1.5" stroke-linejoin="round" stroke-linecap="round"/>
<polyline points="810.0,340.1 835.1,407.7 870.2,437.8" fill="none" stroke="#d2d1cf" stroke-width="1.5" stroke-linejoin="round" stroke-linecap="round"/>
<polyline points="832.6,387.7 845.1,445.3 852.6,475.4 850.1,520.5 835.1,545.6 832.6,560.6 850.1,573.1 897.7,575.6" fill="none" stroke="#d2d1cf" stroke-width="1.5" stroke-linejoin="round" stroke-linecap="round"/>
<polyline points="940.4,585.7 990.5,605.7 993.0,612.0" fill="none" stroke="#d2d1cf" stroke-width="1.5" stroke-linejoin="round" stroke-linecap="round"/>
<polyline points="800.0,495.4 850.1,492.9 895.2,503.0" fill="none" stroke="#d2d1cf" stroke-width="1.5" stroke-linejoin="round" stroke-linecap="round"/>
<polyline points="450.1,260.3 465.2,275.3 482.7,290.3 490.2,310.4 505.3,335.4" fill="none" stroke="#c5c4c8" stroke-width="1.5" stroke-linejoin="round" stroke-linecap="round"/>
<polyline points="550.4,383.1 580.5,393.1 605.5,403.1 615.5,413.1" fill="none" stroke="#c5c4c8" stroke-width="1.5" stroke-linejoin="round" stroke-linecap="round"/>
<polyline points="487.7,440.7 520.3,420.7 560.4,400.6" fill="none" stroke="#c5c4c8" stroke-width="1.5" stroke-linejoin="round" stroke-linecap="round"/>
<polyline points="690.7,340.5 700.8,330.4 698.2,350.5 710.8,385.6 708.3,410.6" fill="none" stroke="#c5c4c8" stroke-width="1.5" stroke-linejoin="round" stroke-linecap="round"/>
<polyline points="400.0,80.2 415.0,87.7 405.0,105.3 402.5,120.3" fill="none" stroke="#aacbf9" stroke-width="2" stroke-linejoin="round" stroke-linecap="round"/>
<polyline points="420.1,136.6 437.6,145.4 450.1,160.4 462.7,175.4 482.7,175.4 505.3,172.9 512.8,188.0" fill="none" stroke="#aacbf9" stroke-width="3" stroke-linejoin="round" stroke-linecap="round"/>
<polyline points="135.3,335.0 134.1,352.6 139.1,370.1 137.3,387.7" fill="none" stroke="#aacbf9" stroke-width="3" stroke-linejoin="round" stroke-linecap="round"/>
<polyline points="668.2,470.4 675.7,485.4 688.2,495.4 678.2,508.0 660.7,492.9" fill="none" stroke="#aacbf9" stroke-width="1.5" stroke-linejoin="round" stroke-linecap="round"/>
<polyline points="743.4,475.4 755.9,490.4 765.9,505.5" fill="none" stroke="#aacbf9" stroke-width="2" stroke-linejoin="round" stroke-linecap="round"/>
<polyline points="770.9,518.0 775.9,545.6 786.0,560.6 800.0,570.6" fill="none" stroke="#aacbf9" stroke-width="3" stroke-linejoin="round" stroke-linecap="round"/>
<polyline points="635.6,580.7 650.6,588.2 665.7,585.7 688.2,575.6 700.8,573.1" fill="none" stroke="#aacbf9" stroke-width="2" stroke-linejoin="round" stroke-linecap="round"/>
<polyline points="432.6,555.6 425.1,556.8 400.0,568.1" fill="none" stroke="#aacbf9" stroke-width="2" stroke-linejoin="round" stroke-linecap="round"/>
<polyline points="825.1,545.6 840.1,585.7 837.6,595.7" fill="none" stroke="#aacbf9" stroke-width="1.5" stroke-linejoin="round" stroke-linecap="round"/>
<polyline points="585.5,307.9 608.0,302.9 625.6,300.4 630.6,310.4 620.6,320.4 633.1,332.9 650.6,355.5 665.7,378.0 660.7,388.1 625.6,368.0 610.5,375.5 615.5,385.6" fill="none" stroke="#aacbf9" stroke-width="2" stroke-linejoin="round" stroke-linecap="round"/>
<polyline points="203.0,0.0 201.8,10.0 213.0,25.1 220.6,45.1 223.1,65.2 218.0,92.7" fill="none" stroke="#ffffff" stroke-width="2" stroke-linejoin="round" stroke-linecap="round"/>
<polyline points="367.2,156.6 360.9,190.5" fill="none" stroke="#ffffff" stroke-width="2" stroke-linejoin="round" stroke-linecap="round"/>
<polyline points="106.5,157.9 140.4,170.4 175.4,181.7 186.7,188.0 189.2,198.0" fill="none" stroke="#ffffff" stroke-width="2" stroke-linejoin="round" stroke-linecap="round"/>
<polyline points="106.5,157.9 80.2,195.5 86.5,198.0 87.7,225.6 105.3,240.6 109.0,279.4" fill="none" stroke="#ffffff" stroke-width="2" stroke-linejoin="round" stroke-linecap="round"/>
<polyline points="0.0,172.9 15.0,190.5 37.6,210.5 62.7,240.6 82.7,263.2 109.0,275.7" fill="none" stroke="#ffffff" stroke-width="2" stroke-linejoin="round" stroke-linecap="round"/>
<polyline points="240.6,263.2 238.1,320.1" fill="none" stroke="#ffffff" stroke-width="2" stroke-linejoin="round" stroke-linecap="round"/>
<polyline points="278.2,255.6 283.2,288.2 290.7,320.1" fill="none" stroke="#ffffff" stroke-width="2" stroke-linejoin="round" stroke-linecap="round"/>
<polyline points="50.1,308.3 52.6,320.1" fill="none" stroke="#ffffff" stroke-width="2" stroke-linejoin="round" stroke-linecap="round"/>
<polyline points="453.9,10.0 455.1,27.6 448.9,50.1 457.6,65.2 475.2,95.2 490.2,110.3 502.8,130.3 505.3,147.9 522.8,160.4 532.8,175.4 540.4,190.5" fill="none" stroke="#ffffff" stroke-width="2" stroke-linejoin="round" stroke-linecap="round"/>
<polyline points="800.0,97.7 763.4,92.7" fill="none" stroke="#ffffff" stroke-width="2" stroke-linejoin="round" stroke-linecap="round"/>
<polyline points="800.0,155.4 738.3,150.4" fill="none" stroke="#ffffff" stroke-width="2" stroke-linejoin="round" stroke-linecap="round"/>
<polyline points="733.3,150.4 781.0,172.9 791.0,200.5" fill="none" stroke="#ffffff" stroke-width="2" stroke-linejoin="round" stroke-linecap="round"/>
<polyline points="487.7,263.2 512.8,244.4" fill="none" stroke="#ffffff" stroke-width="2" stroke-linejoin="round" stroke-linecap="round"/>
<polyline points="650.6,186.7 663.2,162.9" fill="none" stroke="#ffffff" stroke-width="2" stroke-linejoin="round" stroke-linecap="round"/>
<polyline points="425.1,260.7 447.6,273.2 465.2,305.8" fill="none" stroke="#ffffff" stroke-width="2" stroke-linejoin="round" stroke-linecap="round"/>
<polyline points="841.4,135.3 867.7,134.1 875.2,150.4 877.7,162.9" fill="none" stroke="#ffffff" stroke-width="2" stroke-linejoin="round" stroke-linecap="round"/>
<polyline points="841.4,135.3 842.6,150.4 827.6,165.4" fill="none" stroke="#ffffff" stroke-width="2" stroke-linejoin="round" stroke-linecap="round"/>
<polyline points="910.3,218.0 912.8,208.0 940.4,193.0" fill="none" stroke="#ffffff" stroke-width="2" stroke-linejoin="round" stroke-linecap="round"/>
<polyline points="800.0,115.3 841.4,135.3" fill="none" stroke="#ffffff" stroke-width="2" stroke-linejoin="round" stroke-linecap="round"/>
<polyline points="1149.6,5.0 1179.9,20.1" fill="none" stroke="#ffffff" stroke-width="2" stroke-linejoin="round" stroke-linecap="round"/>
<polyline points="51.4,320.0 53.9,412.7 45.1,425.3 10.0,430.3 0.0,426.5" fill="none" stroke="#ffffff" stroke-width="2" stroke-linejoin="round" stroke-linecap="round"/>
<polyline points="53.9,412.7 100.3,420.3 110.3,407.7 122.8,402.7 125.3,391.4 165.4,386.4" fill="none" stroke="#ffffff" stroke-width="2" stroke-linejoin="round" stroke-linecap="round"/>
<polyline points="156.6,366.4 200.5,363.1 235.6,365.1" fill="none" stroke="#ffffff" stroke-width="2" stroke-linejoin="round" stroke-linecap="round"/>
<polyline points="400.0,332.5 350.9,335.0 290.7,338.8" fill="none" stroke="#ffffff" stroke-width="2" stroke-linejoin="round" stroke-linecap="round"/>
<polyline points="290.7,320.0 288.2,345.1" fill="none" stroke="#ffffff" stroke-width="2" stroke-linejoin="round" stroke-linecap="round"/>
<polyline points="348.4,320.0 349.6,350.1" fill="none" stroke="#ffffff" stroke-width="2" stroke-linejoin="round" stroke-linecap="round"/>
<polyline points="375.9,373.9 368.4,395.2 373.4,427.8 391.0,455.3" fill="none" stroke="#ffffff" stroke-width="2" stroke-linejoin="round" stroke-linecap="round"/>
<polyline points="708.3,455.3 710.8,480.4 725.8,520.5 748.4,558.1 758.4,578.1" fill="none" stroke="#ffffff" stroke-width="2" stroke-linejoin="round" stroke-linecap="round"/>
<polyline points="720.8,598.2 758.4,578.1 791.0,560.6" fill="none" stroke="#ffffff" stroke-width="2" stroke-linejoin="round" stroke-linecap="round"/>
<polyline points="700.8,540.6 725.8,520.5 770.9,495.4 791.0,460.4" fill="none" stroke="#ffffff" stroke-width="2" stroke-linejoin="round" stroke-linecap="round"/>
<polyline points="683.2,570.6 700.8,580.7 720.8,598.2" fill="none" stroke="#ffffff" stroke-width="2" stroke-linejoin="round" stroke-linecap="round"/>
<polyline points="750.9,382.7 770.9,402.7 791.0,432.8 800.0,437.8" fill="none" stroke="#ffffff" stroke-width="2" stroke-linejoin="round" stroke-linecap="round"/>
<polyline points="570.4,414.0 567.9,475.4" fill="none" stroke="#ffffff" stroke-width="2" stroke-linejoin="round" stroke-linecap="round"/>
<polyline points="527.8,449.1 570.4,452.8 605.5,455.3" fill="none" stroke="#ffffff" stroke-width="2" stroke-linejoin="round" stroke-linecap="round"/>
<polyline points="605.5,415.2 608.0,475.4" fill="none" stroke="#ffffff" stroke-width="2" stroke-linejoin="round" stroke-linecap="round"/>
<polyline points="462.7,320.0 470.2,340.1" fill="none" stroke="#ffffff" stroke-width="2" stroke-linejoin="round" stroke-linecap="round"/>
<polyline points="862.7,358.8 875.2,377.6 882.7,417.7 914.0,452.8 922.8,475.4 985.5,499.2" fill="none" stroke="#ffffff" stroke-width="2" stroke-linejoin="round" stroke-linecap="round"/>
<polyline points="914.0,452.8 942.9,434.0 957.9,470.4 960.4,485.4 947.9,518.0 932.8,530.5" fill="none" stroke="#ffffff" stroke-width="2" stroke-linejoin="round" stroke-linecap="round"/>
<polyline points="922.8,475.4 910.3,518.0" fill="none" stroke="#ffffff" stroke-width="2" stroke-linejoin="round" stroke-linecap="round"/>
<polyline points="830.1,477.9 807.5,515.5 817.5,535.5 818.8,550.6 800.0,558.1" fill="none" stroke="#ffffff" stroke-width="2" stroke-linejoin="round" stroke-linecap="round"/>
<polyline points="822.6,560.6 845.1,553.1 835.1,535.5 837.6,528.0" fill="none" stroke="#ffffff" stroke-width="2" stroke-linejoin="round" stroke-linecap="round"/>
<polyline points="822.6,560.6 810.0,612.0" fill="none" stroke="#ffffff" stroke-width="2" stroke-linejoin="round" stroke-linecap="round"/>
<polyline points="800.0,540.6 845.1,553.1" fill="none" stroke="#ffffff" stroke-width="2" stroke-linejoin="round" stroke-linecap="round"/>
<polyline points="855.1,605.7 910.3,610.7" fill="none" stroke="#ffffff" stroke-width="2" stroke-linejoin="round" stroke-linecap="round"/>
<polyline points="313.3,125.3 282.0,162.9" fill="none" stroke="#ffffff" stroke-width="2.4" stroke-linejoin="round" stroke-linecap="round"/>
<polyline points="219.3,160.4 240.6,172.9 266.9,188.0 258.1,208.0 250.6,225.6 270.7,230.6 276.9,240.6 278.2,255.6" fill="none" stroke="#ffffff" stroke-width="2.4" stroke-linejoin="round" stroke-linecap="round"/>
<polyline points="240.6,263.2 250.6,260.7 278.2,255.6 313.3,258.1 345.9,270.7 400.0,265.7" fill="none" stroke="#ffffff" stroke-width="2.4" stroke-linejoin="round" stroke-linecap="round"/>
<polyline points="400.0,223.1 355.9,223.1 345.9,240.6 343.4,263.2 345.9,288.2 350.9,320.1" fill="none" stroke="#ffffff" stroke-width="2.4" stroke-linejoin="round" stroke-linecap="round"/>
<polyline points="698.2,215.5 720.8,233.1 735.8,260.7 750.9,288.2" fill="none" stroke="#ffffff" stroke-width="2.4" stroke-linejoin="round" stroke-linecap="round"/>
<polyline points="550.4,186.7 560.4,215.5 575.4,245.6 583.0,275.7 595.5,300.8" fill="none" stroke="#ffffff" stroke-width="2.4" stroke-linejoin="round" stroke-linecap="round"/>
<polyline points="570.4,229.3 595.5,230.6 620.6,238.1 645.6,248.1 670.7,265.7" fill="none" stroke="#ffffff" stroke-width="2.4" stroke-linejoin="round" stroke-linecap="round"/>
<polyline points="575.4,255.6 608.0,258.1 638.1,265.7 648.1,278.2 670.7,265.7 700.8,240.6 723.3,233.1" fill="none" stroke="#ffffff" stroke-width="2.4" stroke-linejoin="round" stroke-linecap="round"/>
<polyline points="502.8,288.2 535.3,273.2 575.4,255.6" fill="none" stroke="#ffffff" stroke-width="2.4" stroke-linejoin="round" stroke-linecap="round"/>
<polyline points="445.1,275.7 502.8,288.2 560.4,288.2" fill="none" stroke="#ffffff" stroke-width="2.4" stroke-linejoin="round" stroke-linecap="round"/>
<polyline points="400.0,230.6 415.0,240.6" fill="none" stroke="#ffffff" stroke-width="2.4" stroke-linejoin="round" stroke-linecap="round"/>
<polyline points="800.0,176.7 827.6,165.4 875.2,150.4" fill="none" stroke="#ffffff" stroke-width="2.4" stroke-linejoin="round" stroke-linecap="round"/>
<polyline points="830.1,185.5 833.8,200.5 910.3,218.0 940.4,225.6 960.4,210.5 985.5,205.5 991.7,193.0 985.5,180.5 972.9,172.9 970.4,145.4" fill="none" stroke="#ffffff" stroke-width="2.4" stroke-linejoin="round" stroke-linecap="round"/>
<polyline points="833.8,200.5 827.6,240.6 820.1,275.7 807.5,300.8" fill="none" stroke="#ffffff" stroke-width="2.4" stroke-linejoin="round" stroke-linecap="round"/>
<polyline points="360.9,553.1 355.9,590.7 350.9,620.8" fill="none" stroke="#ffffff" stroke-width="2.4" stroke-linejoin="round" stroke-linecap="round"/>
<polyline points="185.5,603.2 208.0,580.7 225.6,573.1" fill="none" stroke="#ffffff" stroke-width="2.4" stroke-linejoin="round" stroke-linecap="round"/>
<polyline points="400.0,370.1 417.5,367.6" fill="none" stroke="#ffffff" stroke-width="2.4" stroke-linejoin="round" stroke-linecap="round"/>
<polyline points="400.0,347.6 415.0,345.1" fill="none" stroke="#ffffff" stroke-width="2.4" stroke-linejoin="round" stroke-linecap="round"/>
<polyline points="432.6,360.1 475.2,345.1 505.3,327.5 520.3,320.0" fill="none" stroke="#ffffff" stroke-width="2.4" stroke-linejoin="round" stroke-linecap="round"/>
<polyline points="507.8,370.1 540.4,360.1 560.4,335.0 575.4,320.0" fill="none" stroke="#ffffff" stroke-width="2.4" stroke-linejoin="round" stroke-linecap="round"/>
<polyline points="575.4,362.6 613.0,365.1 635.6,350.1 675.7,320.0" fill="none" stroke="#ffffff" stroke-width="2.4" stroke-linejoin="round" stroke-linecap="round"/>
<polyline points="550.4,377.6 575.4,395.2 615.5,407.7" fill="none" stroke="#ffffff" stroke-width="2.4" stroke-linejoin="round" stroke-linecap="round"/>
<polyline points="575.4,362.6 600.5,385.2 615.5,407.7" fill="none" stroke="#ffffff" stroke-width="2.4" stroke-linejoin="round" stroke-linecap="round"/>
<polyline points="615.5,407.7 655.6,402.7 658.1,395.2 640.6,375.1 613.0,365.1" fill="none" stroke="#ffffff" stroke-width="2.4" stroke-linejoin="round" stroke-linecap="round"/>
<polyline points="655.6,402.7 658.1,427.8 670.7,452.8" fill="none" stroke="#ffffff" stroke-width="2.4" stroke-linejoin="round" stroke-linecap="round"/>
<polyline points="495.2,320.0 510.3,365.1" fill="none" stroke="#ffffff" stroke-width="2.4" stroke-linejoin="round" stroke-linecap="round"/>
<polyline points="675.7,320.0 725.8,355.1 750.9,382.7" fill="none" stroke="#ffffff" stroke-width="2.4" stroke-linejoin="round" stroke-linecap="round"/>
<polyline points="658.1,408.1 660.7,448.2 670.7,480.1" fill="none" stroke="#ffffff" stroke-width="2.4" stroke-linejoin="round" stroke-linecap="round"/>
<polyline points="460.2,302.9 470.2,340.5" fill="none" stroke="#ffffff" stroke-width="2.4" stroke-linejoin="round" stroke-linecap="round"/>
<polyline points="445.1,285.3 450.1,320.4 432.6,360.5" fill="none" stroke="#ffffff" stroke-width="2.4" stroke-linejoin="round" stroke-linecap="round"/>
<polyline points="487.7,262.8 512.8,245.2 535.3,270.3" fill="none" stroke="#ffffff" stroke-width="2.4" stroke-linejoin="round" stroke-linecap="round"/>
<polyline points="668.2,305.4 690.7,315.4 723.3,330.4 750.9,322.9" fill="none" stroke="#ffffff" stroke-width="2.4" stroke-linejoin="round" stroke-linecap="round"/>
<polyline points="723.3,330.4 745.9,368.0 760.9,385.6" fill="none" stroke="#ffffff" stroke-width="2.4" stroke-linejoin="round" stroke-linecap="round"/>
<polyline points="572.9,413.1 570.4,448.2 567.9,480.1" fill="none" stroke="#ffffff" stroke-width="2.4" stroke-linejoin="round" stroke-linecap="round"/>
<polyline points="530.3,448.2 570.4,450.7 608.0,453.2" fill="none" stroke="#ffffff" stroke-width="2.4" stroke-linejoin="round" stroke-linecap="round"/>
<polyline points="550.4,186.3 562.9,220.2 580.5,255.2 588.0,285.3 598.0,300.4" fill="none" stroke="#ffffff" stroke-width="2.6" stroke-linejoin="round" stroke-linecap="round"/>
<polyline points="427.6,295.3 460.2,302.9 497.7,310.4 525.3,312.9" fill="none" stroke="#ffffff" stroke-width="2.6" stroke-linejoin="round" stroke-linecap="round"/>
<polyline points="432.6,360.5 475.2,340.5 500.3,332.9" fill="none" stroke="#ffffff" stroke-width="2.6" stroke-linejoin="round" stroke-linecap="round"/>
<polyline points="575.4,320.4 595.5,335.4" fill="none" stroke="#ffffff" stroke-width="2.6" stroke-linejoin="round" stroke-linecap="round"/>
<polyline points="570.4,227.7 600.5,230.2 625.6,240.2 663.2,265.3" fill="none" stroke="#ffffff" stroke-width="2.6" stroke-linejoin="round" stroke-linecap="round"/>
<polyline points="720.8,232.7 700.8,240.2 670.7,265.3 648.1,280.3" fill="none" stroke="#ffffff" stroke-width="2.6" stroke-linejoin="round" stroke-linecap="round"/>
<polyline points="537.8,7.5 531.6,30.1 527.8,62.7 530.3,95.2 540.4,117.8 550.4,140.4 555.4,155.4 564.2,183.0" fill="none" stroke="#ffffff" stroke-width="3" stroke-linejoin="round" stroke-linecap="round"/>
<polyline points="708.3,82.7 707.0,100.3 688.2,130.3 665.7,160.4 650.6,185.5 630.6,225.6 615.5,255.6 595.5,288.2" fill="none" stroke="#ffffff" stroke-width="3" stroke-linejoin="round" stroke-linecap="round"/>
<polyline points="800.0,183.0 786.0,188.0 793.5,205.5 740.9,228.1" fill="none" stroke="#ffffff" stroke-width="3" stroke-linejoin="round" stroke-linecap="round"/>
<polyline points="475.2,198.0 520.3,193.0 550.4,186.7 595.5,184.2 650.6,186.7 698.2,215.5" fill="none" stroke="#ffffff" stroke-width="3" stroke-linejoin="round" stroke-linecap="round"/>
<polyline points="475.2,200.5 500.3,225.6 530.3,260.7 560.4,288.2 575.4,305.8" fill="none" stroke="#ffffff" stroke-width="3" stroke-linejoin="round" stroke-linecap="round"/>
<polyline points="800.0,5.0 850.1,12.5 920.3,23.8 985.5,40.1 1050.6,43.9 1075.7,53.9" fill="none" stroke="#ffffff" stroke-width="3" stroke-linejoin="round" stroke-linecap="round"/>
<polyline points="174.2,449.6 195.5,442.8 250.6,430.3 273.2,420.3 295.7,392.7 320.8,376.4 350.9,373.9 400.0,370.1" fill="none" stroke="#ffffff" stroke-width="3" stroke-linejoin="round" stroke-linecap="round"/>
<polyline points="236.8,320.0 238.1,375.1 250.6,392.7 273.2,420.3 300.8,447.8 325.8,470.4 350.9,480.4 375.9,490.4 400.0,492.9" fill="none" stroke="#ffffff" stroke-width="3" stroke-linejoin="round" stroke-linecap="round"/>
<polyline points="325.8,470.4 305.8,495.4 289.5,518.0 250.6,533.0 230.6,555.6 223.1,573.1" fill="none" stroke="#ffffff" stroke-width="3" stroke-linejoin="round" stroke-linecap="round"/>
<polyline points="289.5,518.0 323.3,538.0 360.9,553.1 391.0,513.0 400.0,505.5" fill="none" stroke="#ffffff" stroke-width="3" stroke-linejoin="round" stroke-linecap="round"/>
<polyline points="500.3,505.5 475.2,550.6 455.1,585.7 445.1,612.0" fill="none" stroke="#ffffff" stroke-width="3" stroke-linejoin="round" stroke-linecap="round"/>
<polyline points="750.9,432.8 775.9,415.2 800.0,402.7" fill="none" stroke="#ffffff" stroke-width="3" stroke-linejoin="round" stroke-linecap="round"/>
<polyline points="420.1,365.1 422.6,385.2 427.6,402.7 442.6,425.3" fill="none" stroke="#ffffff" stroke-width="3" stroke-linejoin="round" stroke-linecap="round"/>
<polyline points="550.4,377.6 540.4,395.2 530.3,425.3 525.3,460.4" fill="none" stroke="#ffffff" stroke-width="3" stroke-linejoin="round" stroke-linecap="round"/>
<polyline points="825.1,337.5 842.6,370.1 850.1,390.2 880.2,435.3 867.7,470.4 852.6,500.5" fill="none" stroke="#ffffff" stroke-width="3" stroke-linejoin="round" stroke-linecap="round"/>
<polyline points="800.0,402.7 842.6,370.1 862.7,358.8 892.7,335.0 955.4,333.8 972.9,330.0" fill="none" stroke="#ffffff" stroke-width="3" stroke-linejoin="round" stroke-linecap="round"/>
<polyline points="807.5,320.0 825.1,337.5" fill="none" stroke="#ffffff" stroke-width="3" stroke-linejoin="round" stroke-linecap="round"/>
<polyline points="475.2,202.6 502.8,232.7 535.3,270.3 560.4,285.3 580.5,310.4 600.5,340.5 615.5,360.5" fill="none" stroke="#ffffff" stroke-width="3" stroke-linejoin="round" stroke-linecap="round"/>
<polyline points="420.1,232.7 445.1,260.3 445.1,285.3 500.3,290.3 545.4,270.3 580.5,255.2 625.6,260.3 645.6,280.3 653.1,292.8 668.2,305.4 710.8,325.4 743.4,350.5" fill="none" stroke="#ffffff" stroke-width="3.4" stroke-linejoin="round" stroke-linecap="round"/>
<polyline points="495.2,300.4 500.3,332.9 510.3,360.5 507.8,373.0 540.4,360.5 565.4,335.4 595.5,335.4 618.0,360.5 655.6,395.6 658.1,408.1 708.3,433.2" fill="none" stroke="#ffffff" stroke-width="3.4" stroke-linejoin="round" stroke-linecap="round"/>
<polyline points="460.2,410.6 507.8,380.6 540.4,360.5" fill="none" stroke="#ffffff" stroke-width="3.4" stroke-linejoin="round" stroke-linecap="round"/>
<polyline points="650.6,186.3 625.6,235.2 608.0,267.8 595.5,295.3 575.4,320.4 545.4,358.0 535.3,380.6 525.3,435.7 527.8,480.1" fill="none" stroke="#ffffff" stroke-width="3.4" stroke-linejoin="round" stroke-linecap="round"/>
<polyline points="698.2,213.9 675.7,260.3 653.1,292.8 618.0,330.4 580.5,368.0 550.4,385.6 530.3,430.7" fill="none" stroke="#ffffff" stroke-width="3.4" stroke-linejoin="round" stroke-linecap="round"/>
<polyline points="218.0,91.5 250.6,90.2 275.7,95.2 295.7,110.3 313.3,125.3 333.3,140.4 350.9,150.4 370.9,156.6 400.0,160.4" fill="none" stroke="#ffffff" stroke-width="3.6" stroke-linejoin="round" stroke-linecap="round"/>
<polyline points="160.4,288.2 190.5,298.2 225.6,307.0 250.6,310.8 288.2,309.5 325.8,305.8 400.0,298.2" fill="none" stroke="#ffffff" stroke-width="3.6" stroke-linejoin="round" stroke-linecap="round"/>
<polyline points="400.0,160.4 410.0,162.9 432.6,175.4 462.7,195.5 475.2,198.0" fill="none" stroke="#ffffff" stroke-width="3.6" stroke-linejoin="round" stroke-linecap="round"/>
<polyline points="791.0,50.1 770.9,82.7 748.4,120.3 733.3,150.4 710.8,195.5 698.2,215.5" fill="none" stroke="#ffffff" stroke-width="3.6" stroke-linejoin="round" stroke-linecap="round"/>
<polyline points="400.0,196.7 420.1,200.5 440.1,210.5 450.1,215.5" fill="none" stroke="#ffffff" stroke-width="3.6" stroke-linejoin="round" stroke-linecap="round"/>
<polyline points="450.1,215.5 430.1,240.6 415.0,260.7 410.0,288.2 412.5,320.1" fill="none" stroke="#ffffff" stroke-width="3.6" stroke-linejoin="round" stroke-linecap="round"/>
<polyline points="800.0,200.5 830.1,185.5 875.2,162.9 910.3,147.9 930.3,140.4 947.9,130.3" fill="none" stroke="#ffffff" stroke-width="3.6" stroke-linejoin="round" stroke-linecap="round"/>
<polyline points="400.0,440.3 422.6,437.8 442.6,425.3 462.7,410.2 475.2,405.2" fill="none" stroke="#ffffff" stroke-width="4" stroke-linejoin="round" stroke-linecap="round"/>
<polyline points="625.6,470.4 628.1,495.4 633.1,533.0 635.6,570.6 633.1,612.0" fill="none" stroke="#ffffff" stroke-width="4" stroke-linejoin="round" stroke-linecap="round"/>
<polyline points="708.3,432.8 745.9,447.8 775.9,455.3 800.0,460.4" fill="none" stroke="#ffffff" stroke-width="4" stroke-linejoin="round" stroke-linecap="round"/>
<polyline points="460.2,412.7 500.3,390.2 540.4,370.1 575.4,352.6 600.5,340.1 625.6,320.0" fill="none" stroke="#ffffff" stroke-width="4" stroke-linejoin="round" stroke-linecap="round"/>
<polyline points="532.8,427.8 565.4,414.0 620.6,414.0 658.1,405.2 708.3,432.8" fill="none" stroke="#ffffff" stroke-width="4" stroke-linejoin="round" stroke-linecap="round"/>
<polyline points="800.0,465.4 830.1,477.9 870.2,500.5 905.3,518.0 950.4,540.6 985.5,568.1 1025.6,598.2 1033.1,605.7" fill="none" stroke="#ffffff" stroke-width="4.5" stroke-linejoin="round" stroke-linecap="round"/>
<polyline points="440.1,427.8 462.7,447.8 500.3,475.4 492.7,492.9 525.3,530.5 535.3,550.6 536.6,575.6 530.3,612.0" fill="none" stroke="#ffffff" stroke-width="5" stroke-linejoin="round" stroke-linecap="round"/>
<polyline points="620.6,414.0 625.6,470.4" fill="none" stroke="#ffffff" stroke-width="5" stroke-linejoin="round" stroke-linecap="round"/>
<!-- orange roads -->

<g fill="none" stroke-linejoin="round" stroke-linecap="round">
  <!-- casings -->
  <path d="M0,292 L20,302 L35,306 L55,303.8 L100,293 L140,285.7 L160,285.7" stroke="#f0c57c" stroke-width="6.5"/>
  <path d="M600,-3 L540,2 L500,3.8 L440,6.3 L400,8.8 L371,11.3 L346,15 L326,23.8 L308,40 L290.7,60 L270.7,87.7 L245.6,122.8 L225.6,147.9 L208,173 L193,198 L180.5,225.6 L170.4,255.6 L161.7,288 L156.6,320 L154,330 L160.4,352.6 L173,392.7 L185.5,432.8 L198,472.9 L213,525.5 L223,560.6 L233,578 L250.6,596 L275.7,611 L338,620.7 L400,623 L450,630 L520,648" stroke="#ecb15f" stroke-width="8"/><path d="M700,-4 L728,7.5 L751,22.6 L776,37.6 L800,49 L825,63 L875,93 L910,115 L923,125 L929,140 L936.6,170 L948,220.6 L960.4,265.7 L973,320 L983,357.6 L994,402.7 L999,440 L995.5,460 L980.5,495.4 L960.4,535.5 L935.3,575.6 L910.3,620.8 L898,644" stroke="#ecb15f" stroke-width="8"/>
  <path d="M0,116.5 L25,114 L62.7,104 L105,91.5 L135,85 L155,84 L170,87.7 L195.5,99 L220.6,112.8 L243,127" stroke="#e29a2e" stroke-width="6.5"/>
  <path d="M948,130 L975.4,115.3 L1013,96.5 L1050.6,77.7 L1073,65 L1095.7,47.6 L1120.8,27.6 L1151,5 L1160,-3" stroke="#e29a2e" stroke-width="5"/>
  <path d="M810,40 L835,37.6 L842.6,22.6 L850,5 L852.6,-2" stroke="#e29a2e" stroke-width="4.6"/>
  <path d="M1031.8,605.7 L1050.6,620.8 L1072,642" stroke="#e29a2e" stroke-width="6"/>
  <!-- fills -->
  <path d="M0,292 L20,302 L35,306 L55,303.8 L100,293 L140,285.7 L160,285.7" stroke="#fbe3b6" stroke-width="4"/>
  <path d="M600,-3 L540,2 L500,3.8 L440,6.3 L400,8.8 L371,11.3 L346,15 L326,23.8 L308,40 L290.7,60 L270.7,87.7 L245.6,122.8 L225.6,147.9 L208,173 L193,198 L180.5,225.6 L170.4,255.6 L161.7,288 L156.6,320 L154,330 L160.4,352.6 L173,392.7 L185.5,432.8 L198,472.9 L213,525.5 L223,560.6 L233,578 L250.6,596 L275.7,611 L338,620.7 L400,623 L450,630 L520,648" stroke="#f9d7a0" stroke-width="5.4"/><path d="M700,-4 L728,7.5 L751,22.6 L776,37.6 L800,49 L825,63 L875,93 L910,115 L923,125 L929,140 L936.6,170 L948,220.6 L960.4,265.7 L973,320 L983,357.6 L994,402.7 L999,440 L995.5,460 L980.5,495.4 L960.4,535.5 L935.3,575.6 L910.3,620.8 L898,644" stroke="#f9d7a0" stroke-width="5.4"/>
  <path d="M0,116.5 L25,114 L62.7,104 L105,91.5 L135,85 L155,84 L170,87.7 L195.5,99 L220.6,112.8 L243,127" stroke="#f9cf85" stroke-width="3.8"/>
  <path d="M948,130 L975.4,115.3 L1013,96.5 L1050.6,77.7 L1073,65 L1095.7,47.6 L1120.8,27.6 L1151,5 L1160,-3" stroke="#f9cf85" stroke-width="2.6"/>
  <path d="M810,40 L835,37.6 L842.6,22.6 L850,5 L852.6,-2" stroke="#f9cf85" stroke-width="2.2"/>
  <path d="M1031.8,605.7 L1050.6,620.8 L1072,642" stroke="#f9cf85" stroke-width="3.4"/>
</g>
<!-- road shield -->
<rect x="61.5" y="89.5" width="44.5" height="21" fill="#cd696b"/>
<text x="67.5" y="107" font-size="17.5" font-weight="700" fill="#fff" textLength="33" lengthAdjust="spacingAndGlyphs">P28</text>
<!-- labels -->
<g paint-order="stroke" stroke-linejoin="round" stroke="#f5f3ee" stroke-width="3.4" lengthAdjust="spacingAndGlyphs">
 <g fill="#6b3a10" font-size="16" stroke="#fbe9cf" stroke-width="2.6">
  <text lengthAdjust="spacingAndGlyphs" x="381" y="15.5" textLength="59" transform="rotate(-3 410 15)">МКАД</text>
  <text lengthAdjust="spacingAndGlyphs" x="0" y="0" textLength="62" transform="translate(694,-24) rotate(37)">МКАД</text>
  <text lengthAdjust="spacingAndGlyphs" x="0" y="0" textLength="61" transform="translate(186.5,479) rotate(66)">МКАД</text>
  <text lengthAdjust="spacingAndGlyphs" x="0" y="0" textLength="62" transform="translate(969,349) rotate(70)">МКАД</text>
 </g>
 <g fill="#3a3327" font-size="20">
  <text lengthAdjust="spacingAndGlyphs" x="129.5" y="109.5" textLength="124.5">Ждановичи</text>
  <text lengthAdjust="spacingAndGlyphs" x="26" y="139" textLength="77">Качино</text>
  <text lengthAdjust="spacingAndGlyphs" x="30" y="237" textLength="101">Тарасово</text>
  <text lengthAdjust="spacingAndGlyphs" x="752" y="37.6" textLength="94">Боровая</text>
  <text lengthAdjust="spacingAndGlyphs" x="882" y="55.6" textLength="84">Копище</text>
  <text lengthAdjust="spacingAndGlyphs" x="824" y="4.5" textLength="141">Валерьяново</text>
  <text lengthAdjust="spacingAndGlyphs" x="1146" y="4.5" textLength="62">Боег</text>
  <text lengthAdjust="spacingAndGlyphs" x="1149.6" y="28" textLength="68">город</text>
  <text lengthAdjust="spacingAndGlyphs" x="1135.8" y="51.4" textLength="92">Колодищи</text>
  <text lengthAdjust="spacingAndGlyphs" x="1166.4" y="151.6" textLength="70">Колод</text>
  <text lengthAdjust="spacingAndGlyphs" x="974.7" y="564.4" textLength="96">Большой</text>
  <text lengthAdjust="spacingAndGlyphs" x="968.4" y="587.7" textLength="111">Тростенец</text>
  <text lengthAdjust="spacingAndGlyphs" x="186.7" y="600.7" textLength="115.3">Дворицкая</text>
  <text lengthAdjust="spacingAndGlyphs" x="200" y="623" textLength="88" fill="#8f8b84">Слобода</text>
  <text lengthAdjust="spacingAndGlyphs" x="88" y="641" textLength="77">Озерцо</text>
 </g>
 <g fill="#8b7a5e" font-size="15.6">
  <text lengthAdjust="spacing" x="179" y="229.3" textLength="96">КАМЕННАЯ</text>
  <text lengthAdjust="spacing" x="199" y="247.4" textLength="56">ГОРКА</text>
  <text lengthAdjust="spacing" x="510.8" y="55.6" textLength="84.7">НОВИНКИ</text>
  <text lengthAdjust="spacing" x="388.5" y="79" textLength="136.3">ЦЕНТРАЛЬНЫЙ</text>
  <text lengthAdjust="spacing" x="427.6" y="96.5" textLength="60.4">РАЙОН</text>
  <text lengthAdjust="spacing" x="652.6" y="66.4" textLength="103.8">СОВЕТСКИЙ</text>
  <text lengthAdjust="spacing" x="675" y="84" textLength="59.6">РАЙОН</text>
  <text lengthAdjust="spacing" x="940" y="145.9" textLength="66.8">УРУЧЬЕ</text>
  <text lengthAdjust="spacing" x="828" y="179" textLength="145.4">ПЕРВОМАЙСКИЙ</text>
  <text lengthAdjust="spacing" x="870.7" y="196.7" textLength="60.1">РАЙОН</text>
  <text lengthAdjust="spacing" x="740" y="315" textLength="143">ПАРТИЗАНСКИЙ</text>
  <text lengthAdjust="spacing" x="781" y="332.7" textLength="60">РАЙОН</text>
  <text lengthAdjust="spacing" x="216" y="353.8" textLength="131">ФРУНЗЕНСКИЙ</text>
  <text lengthAdjust="spacing" x="250.6" y="371.4" textLength="60.2">РАЙОН</text>
  <text lengthAdjust="spacing" x="338" y="491.7" textLength="123">МОСКОВСКИЙ</text>
  <text lengthAdjust="spacing" x="370" y="509" textLength="61">РАЙОН</text>
  <text lengthAdjust="spacing" x="439.6" y="563.6" textLength="127.1">ОКТЯБРЬСКИЙ</text>
  <text lengthAdjust="spacing" x="472.7" y="581" textLength="60.1">РАЙОН</text>
  <text lengthAdjust="spacing" x="914" y="434" textLength="102.8">АНГАРСКАЯ</text>
  <text lengthAdjust="spacing" x="848.9" y="500" textLength="106.5">ЗАВОДСКОЙ</text>
  <text lengthAdjust="spacing" x="871.4" y="518" textLength="60.2">РАЙОН</text>
  <text lengthAdjust="spacing" x="972" y="641" textLength="70" fill="#b5ab9a">ШАБАНЫ</text>
 </g>
 <g fill="#8b7a5e" font-size="24.5">
  <text lengthAdjust="spacing" x="579" y="542.5" textLength="169">ЛЕНИНСКИЙ</text>
  <text lengthAdjust="spacing" x="618" y="568" textLength="92">РАЙОН</text>
 </g>
 <text lengthAdjust="spacingAndGlyphs" x="0" y="0" font-size="15" font-style="italic" fill="#5b8fe0" textLength="62" stroke="#d9e8fc" stroke-width="2.5" transform="translate(756,628) rotate(-42)">Свислочь</text>
</g>
<!-- geofence circle -->
<circle cx="590" cy="320" r="168.4" fill="rgba(51,102,255,0.25)" stroke="rgba(58,108,245,0.74)" stroke-width="8"/>
<g>
 <text lengthAdjust="spacingAndGlyphs" x="550" y="333" font-size="36.5" fill="#2a2e40" textLength="112" stroke="rgba(214,222,246,0.75)" stroke-width="3.5" stroke-linejoin="round" paint-order="stroke">Минск</text>
 <text lengthAdjust="spacingAndGlyphs" x="550" y="333" font-size="36.5" fill="#2a2e40" textLength="112" stroke="#2a2e40" stroke-width="1.1">Минск</text>
</g>
<!-- google logo -->
<g font-size="42.5" font-weight="400">
  <text x="13.8" y="625.5" textLength="123" lengthAdjust="spacingAndGlyphs" fill="#fff" stroke="#fff" stroke-width="5" stroke-linejoin="round" opacity="0.75">Google</text>
  <text x="13.8" y="625.5" textLength="123" lengthAdjust="spacingAndGlyphs" stroke-width="1.1" stroke-linejoin="round"><tspan fill="#4285f4" stroke="#4285f4">G</tspan><tspan fill="#ea4335" stroke="#ea4335">o</tspan><tspan fill="#fbbc05" stroke="#fbbc05">o</tspan><tspan fill="#4285f4" stroke="#4285f4">g</tspan><tspan fill="#34a853" stroke="#34a853">l</tspan><tspan fill="#ea4335" stroke="#ea4335">e</tspan></text>
</g>
<!-- attribution bar -->
<rect x="205.5" y="612" width="974.5" height="28" fill="rgba(245,245,245,0.72)"/>
<g font-size="19.5" fill="#444" lengthAdjust="spacingAndGlyphs">
  <text lengthAdjust="spacingAndGlyphs" x="216.5" y="634.5" textLength="391">Картографические данные © 2018 Google</text>
  <text lengthAdjust="spacingAndGlyphs" x="633" y="634.5" textLength="229">Условия использования</text>
  <text lengthAdjust="spacingAndGlyphs" x="885.7" y="634.5" textLength="282.3">Сообщить об ошибке на карте</text>
</g>
<rect x="620" y="614" width="1" height="26" fill="#d8d8d8"/><rect x="874.5" y="614" width="1" height="26" fill="#d8d8d8"/>
<!-- scale control -->
<rect x="51.4" y="567" width="140.3" height="31" fill="rgba(255,255,255,0.5)"/>
<rect x="51.4" y="598" width="147.6" height="30.8" fill="rgba(255,255,255,0.5)"/>
<path d="M52.2,566.2 V629.2 M190.3,566.2 V598 M198.1,598 V629.2 M50.3,597.8 H200" fill="none" stroke="#777" stroke-width="3.7"/>
<g font-size="22" fill="#222" lengthAdjust="spacingAndGlyphs">
  <text lengthAdjust="spacingAndGlyphs" x="64.7" y="589.4" textLength="46.8">3 km</text>
  <text lengthAdjust="spacingAndGlyphs" x="64.7" y="623.3" textLength="40.3">2 mi</text>
</g>
<!-- leaflet attribution -->
<rect x="1094" y="568" width="86" height="32" fill="rgba(255,255,255,0.6)"/>
<rect x="1104" y="568.5" width="66" height="29" rx="7" fill="#fff" filter="url(#sh)"/>
<text x="1107.5" y="590.5" font-size="22.5" fill="#2b77ad" textLength="59" lengthAdjust="spacingAndGlyphs">Leaflet</text>
<!-- control buttons -->
<defs><filter id="sh" x="-20%" y="-20%" width="140%" height="150%"><feDropShadow dx="0" dy="1.5" stdDeviation="1.6" flood-color="#000" flood-opacity="0.32"/></filter></defs>
<g filter="url(#sh)" fill="#fff"><rect x="1100" y="288" width="60" height="60" rx="8"/><rect x="1100" y="408" width="60" height="58" rx="8"/><rect x="1100" y="488" width="60" height="60" rx="8"/></g>
<g fill="none" stroke="#444" stroke-width="3.2" stroke-linecap="round" stroke-linejoin="round">
  <path d="M1107.5,311.5 L1130,299.5 L1152.5,311.5 L1130,323.5 Z" stroke-width="3"/>
  <path d="M1107.5,321.5 L1130,333.5 L1152.5,321.5" stroke-width="3"/>
  <path d="M1112.5,437.5 H1148.5 M1130.5,419.5 V455.5"/>
  <path d="M1112.5,517.5 H1149"/>
</g>

</svg>
</div>

<div class="t" style="left:558.8px;top:36.3px;font-size:28px;color:#fff;letter-spacing:0.23px;">Геозоны</div>
<div class="t" style="left:680.0px;top:36.3px;font-size:28px;color:#8a8b90;letter-spacing:1.72px;">/</div>
<div class="t" style="left:701.8px;top:36.3px;font-size:28px;color:#fff;font-weight:700;transform:scaleX(0.8930);transform-origin:0 0;">Events</div>
<div class="t" style="left:2558.5px;top:29.5px;font-size:20px;color:#fff;font-weight:700;letter-spacing:0.28px;text-shadow:0.4px 0 0 #fff;">99+</div>
<div class="t" style="left:2678.5px;top:29.5px;font-size:20px;color:#fff;font-weight:700;letter-spacing:0.28px;text-shadow:0.4px 0 0 #fff;">99+</div>
<div class="t" style="left:97.0px;top:144.3px;font-size:28px;color:#fff;letter-spacing:-0.23px;">Инфо Площадка</div>
<div class="t" style="left:97.0px;top:260.3px;font-size:28px;color:#fff;letter-spacing:0.03px;">Биржа</div>
<div class="t" style="left:96.5px;top:358.1px;font-size:28px;color:#fff;letter-spacing:0.37px;">Контрольная</div>
<div class="t" style="left:96.5px;top:394.1px;font-size:28px;color:#fff;letter-spacing:-0.14px;">башня</div>
<div class="t" style="left:96.5px;top:492.3px;font-size:28px;color:#fff;font-weight:700;transform:scaleX(0.9571);transform-origin:0 0;">Автопарк</div>
<div class="t" style="left:96.6px;top:1142.3px;font-size:28px;color:#fff;letter-spacing:-0.28px;">Отчеты</div>
<div class="t" style="left:96.6px;top:1258.3px;font-size:28px;color:#fff;letter-spacing:0.78px;">Контакты</div>
<div class="t" style="left:96.6px;top:1374.3px;font-size:28px;color:#fff;letter-spacing:0.41px;">Компания</div>
<div class="t" style="left:41.2px;top:599.5px;font-size:26px;color:#fff;letter-spacing:-0.29px;">Карта</div>
<div class="t" style="left:41.2px;top:661.3px;font-size:26px;color:#fff;letter-spacing:-0.23px;">Карта 2.0</div>
<div class="t" style="left:41.2px;top:723.2px;font-size:26px;color:#fff;letter-spacing:0.38px;">Грузовики</div>
<div class="t" style="left:41.2px;top:785.2px;font-size:26px;color:#fff;letter-spacing:0.02px;">Прицепы</div>
<div class="t" style="left:41.2px;top:847.8px;font-size:26px;color:#fff;letter-spacing:-0.32px;">Водители</div>
<div class="t" style="left:41.2px;top:909.8px;font-size:26px;color:#fff;letter-spacing:0.31px;">Контроль</div>
<div class="t" style="left:41.2px;top:971.8px;font-size:26px;color:#fff;font-weight:700;transform:scaleX(0.9453);transform-origin:0 0;">Геозоны</div>
<div class="t" style="left:41.2px;top:1033.6px;font-size:26px;color:#fff;letter-spacing:0.56px;">Документы</div>
<div class="t" style="left:545.0px;top:190.8px;font-size:41px;color:#000;font-weight:700;transform:scaleX(0.9148);transform-origin:0 0;text-shadow:0.5px 0 0 currentColor,-0.25px 0 0 currentColor;">Events</div>
<div class="t" style="left:2388.3px;top:182.2px;font-size:24px;color:#fff;font-weight:700;letter-spacing:-0.32px;text-shadow:0.6px 0 0 #fff,-0.3px 0 0 #fff;">Редактировать</div>
<div class="t" style="left:2627.0px;top:182.2px;font-size:24px;color:#fff;font-weight:700;transform:scaleX(0.9311);transform-origin:0 0;text-shadow:0.6px 0 0 #fff,-0.3px 0 0 #fff;">Архивировать</div>
<div class="t" style="left:530.0px;top:303.5px;font-size:26px;color:#4c9ad9;font-weight:700;transform:scaleX(0.9410);transform-origin:0 0;text-shadow:0.5px 0 0 currentColor,-0.25px 0 0 currentColor;">История событий</div>
<div class="t" style="left:846.3px;top:303.5px;font-size:26px;color:#4c9ad9;font-weight:700;transform:scaleX(0.9456);transform-origin:0 0;text-shadow:0.5px 0 0 currentColor,-0.25px 0 0 currentColor;">Сейчас в геозоне</div>
<div class="t" style="left:1153.0px;top:303.5px;font-size:26px;color:#555;font-weight:700;transform:scaleX(0.9449);transform-origin:0 0;text-shadow:0.5px 0 0 currentColor,-0.25px 0 0 currentColor;">Общая информация</div>
<div class="t" style="left:460.8px;top:403.5px;font-size:24px;color:#999;letter-spacing:0.36px;">Подконтрольные группы</div>
<div class="t" style="left:468.0px;top:443.2px;font-size:24px;color:#fff;font-weight:700;transform:scaleX(0.9368);transform-origin:0 0;">Truck2</div>
<div class="t" style="left:460.8px;top:486.0px;font-size:24px;color:#999;letter-spacing:0.44px;">Подконтрольные грузовики</div>
<div class="t" style="left:468.0px;top:525.0px;font-size:24px;color:#fff;font-weight:700;transform:scaleX(0.9046);transform-origin:0 0;">TEST TRUCK</div>
<div class="t" style="left:460.5px;top:600.1px;font-size:28px;color:#000;font-weight:700;letter-spacing:0.32px;text-shadow:0.5px 0 0 currentColor,-0.25px 0 0 currentColor;">Оповещения о событиях:</div>
<div class="t" style="left:460.5px;top:689.0px;font-size:24px;color:#000;letter-spacing:0.08px;">Тип события:</div>
<div class="t" style="left:666.3px;top:689.0px;font-size:24px;color:#000;font-weight:700;transform:scaleX(0.9074);transform-origin:0 0;">Въехал</div>
<div class="t" style="left:460.5px;top:723.0px;font-size:24px;color:#000;letter-spacing:-0.01px;">Тип</div>
<div class="t" style="left:460.5px;top:757.0px;font-size:24px;color:#000;letter-spacing:0.15px;">оповещения:</div>
<div class="t" style="left:666.3px;top:757.0px;font-size:24px;color:#000;font-weight:700;transform:scaleX(0.9487);transform-origin:0 0;">Нотификация</div>
<div class="t" style="left:460.5px;top:791.0px;font-size:24px;color:#000;letter-spacing:-0.09px;">Получатель:</div>
<div class="t" style="left:666.3px;top:791.0px;font-size:24px;color:#000;font-weight:700;transform:scaleX(0.9084);transform-origin:0 0;">Все</div>
<div class="t" style="left:460.5px;top:867.0px;font-size:24px;color:#000;letter-spacing:0.08px;">Тип события:</div>
<div class="t" style="left:666.3px;top:867.0px;font-size:24px;color:#000;font-weight:700;transform:scaleX(0.9413);transform-origin:0 0;">Покинул</div>
<div class="t" style="left:460.5px;top:901.0px;font-size:24px;color:#000;letter-spacing:-0.01px;">Тип</div>
<div class="t" style="left:460.5px;top:935.0px;font-size:24px;color:#000;letter-spacing:0.15px;">оповещения:</div>
<div class="t" style="left:666.3px;top:935.0px;font-size:24px;color:#000;font-weight:700;transform:scaleX(0.9487);transform-origin:0 0;">Нотификация</div>
<div class="t" style="left:460.5px;top:969.0px;font-size:24px;color:#000;letter-spacing:-0.09px;">Получатель:</div>
<div class="t" style="left:666.3px;top:969.0px;font-size:24px;color:#000;font-weight:700;transform:scaleX(0.9084);transform-origin:0 0;">Все</div>
<div class="t" style="left:460.5px;top:1045.0px;font-size:24px;color:#000;letter-spacing:0.08px;">Тип события:</div>
<div class="t" style="left:666.3px;top:1045.0px;font-size:24px;color:#000;font-weight:700;transform:scaleX(0.9493);transform-origin:0 0;">Отдалился на &gt; 10 км</div>
<div class="t" style="left:460.5px;top:1079.0px;font-size:24px;color:#000;letter-spacing:-0.01px;">Тип</div>
<div class="t" style="left:460.5px;top:1113.0px;font-size:24px;color:#000;letter-spacing:0.15px;">оповещения:</div>
<div class="t" style="left:666.3px;top:1113.0px;font-size:24px;color:#000;font-weight:700;transform:scaleX(0.9487);transform-origin:0 0;">Нотификация</div>
<div class="t" style="left:460.5px;top:1147.0px;font-size:24px;color:#000;letter-spacing:-0.09px;">Получатель:</div>
<div class="t" style="left:666.3px;top:1147.0px;font-size:24px;color:#000;font-weight:700;transform:scaleX(0.9084);transform-origin:0 0;">Все</div>
<div class="t" style="left:460.5px;top:1223.0px;font-size:24px;color:#000;letter-spacing:0.08px;">Тип события:</div>
<div class="t" style="left:666.3px;top:1223.0px;font-size:24px;color:#000;font-weight:700;letter-spacing:-0.37px;">Превышение скорости 80 км/ч</div>
<div class="t" style="left:460.5px;top:1257.0px;font-size:24px;color:#000;letter-spacing:0.49px;">Порог</div>
<div class="t" style="left:460.5px;top:1291.0px;font-size:24px;color:#000;letter-spacing:0.24px;">срабатывания:</div>
<div class="t" style="left:666.3px;top:1291.0px;font-size:24px;color:#000;font-weight:700;letter-spacing:0.54px;">10 км/ч</div>
<div class="t" style="left:460.5px;top:1325.0px;font-size:24px;color:#000;letter-spacing:-0.01px;">Тип</div>
<div class="t" style="left:460.5px;top:1359.0px;font-size:24px;color:#000;letter-spacing:0.15px;">оповещения:</div>
<div class="t" style="left:666.3px;top:1359.0px;font-size:24px;color:#000;font-weight:700;transform:scaleX(0.9487);transform-origin:0 0;">Нотификация</div>
<div class="t" style="left:460.5px;top:1393.0px;font-size:24px;color:#000;letter-spacing:-0.09px;">Получатель:</div>
<div class="t" style="left:666.3px;top:1393.0px;font-size:24px;color:#000;font-weight:700;transform:scaleX(0.9084);transform-origin:0 0;">Все</div>

<!-- bottom fade -->
<div class="a" style="left:400px;top:1368px;width:2480px;height:60px;background:linear-gradient(to bottom,rgba(0,0,0,0),rgba(0,0,0,.10))"></div>

</body>
</html>
